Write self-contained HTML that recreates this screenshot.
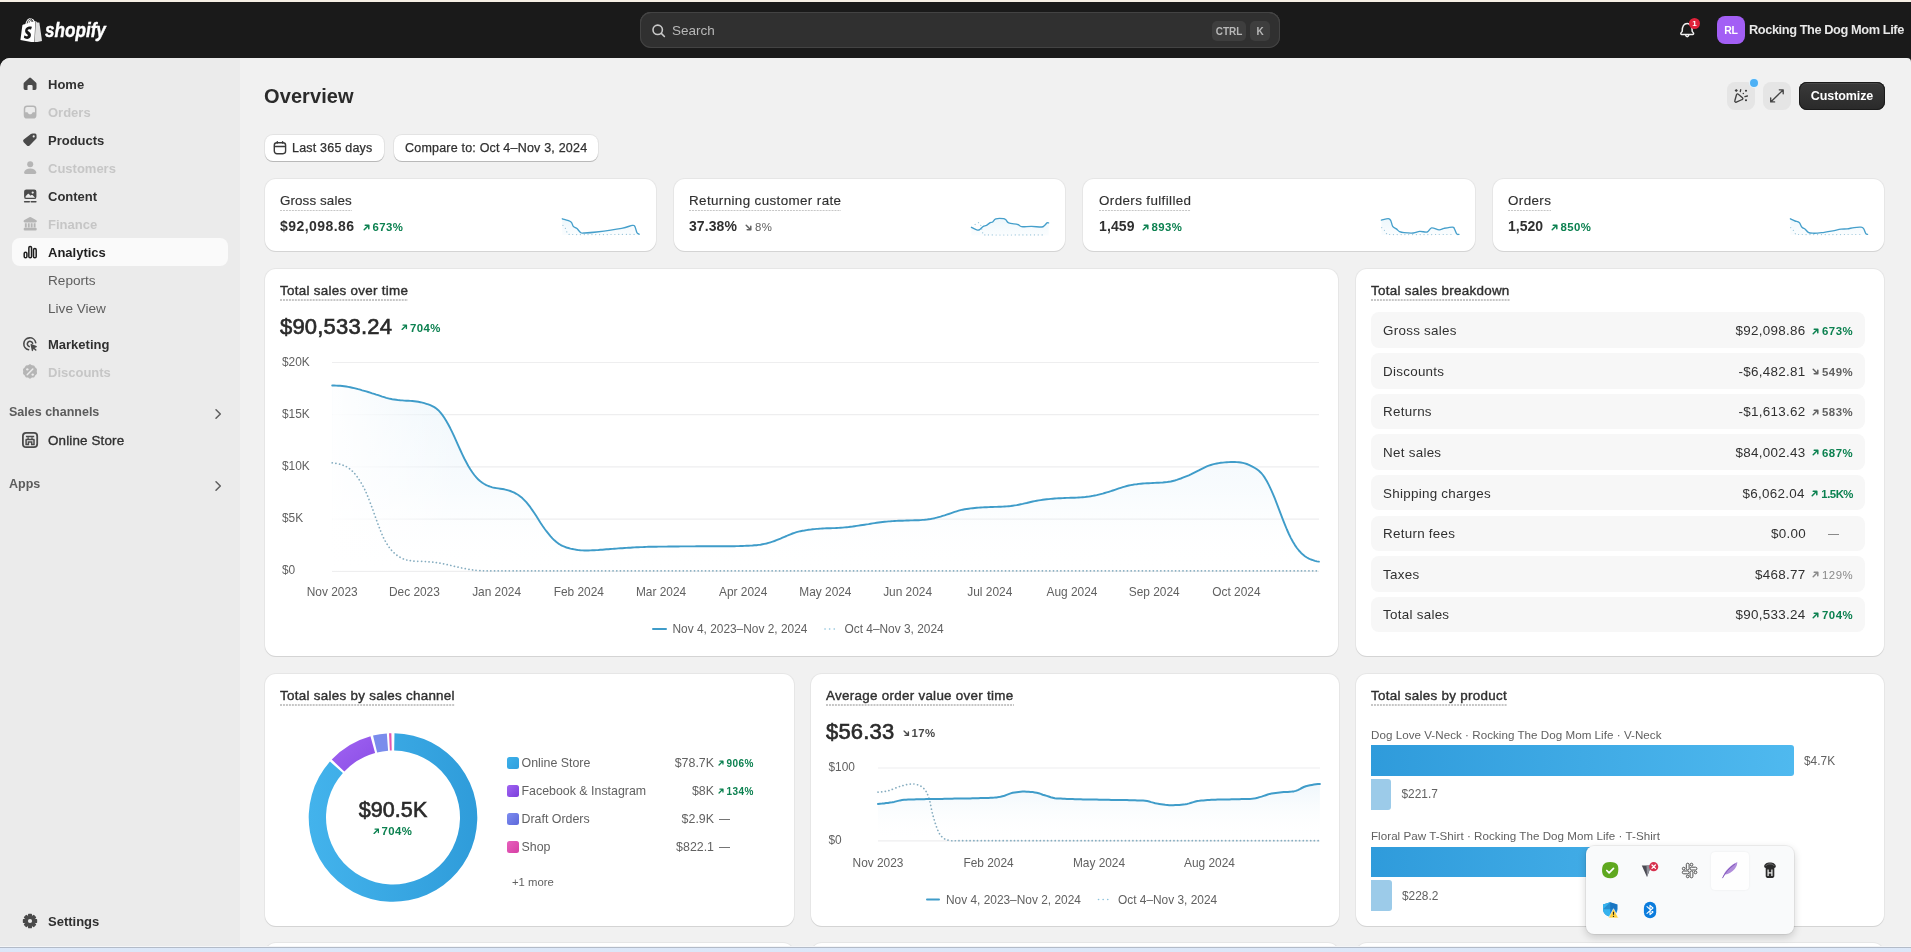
<!DOCTYPE html>
<html lang="en">
<head>
<meta charset="utf-8">
<title>Shopify Analytics Overview</title>
<style>
*{box-sizing:border-box;margin:0;padding:0}
html,body{width:1911px;height:952px;overflow:hidden;background:#f1f1f1}
body{font-family:"Liberation Sans",sans-serif;font-size:13px;color:#303030;position:relative}
.abs{position:absolute}
#wrap{position:absolute;left:0;top:0;width:1911px;height:952px;overflow:hidden;will-change:transform}
#topstrip{position:absolute;left:0;top:0;width:1911px;height:2px;background:#f6efe4}
#topbar{position:absolute;left:0;top:2px;width:1911px;height:66px;background:#1a1a1a}
#frame{position:absolute;left:0;top:57.500px;width:1911px;height:895px;background:#f1f1f1;border-radius:10px 4px 0 0}
#sidebar{position:absolute;left:0;top:57.500px;width:240px;height:895px;background:#ebebeb;border-radius:10px 0 0 0}
#botstrip{position:absolute;left:0;top:946px;width:1911px;height:6px;background:linear-gradient(#f4f5f7 0,#f4f5f7 1px,#b3bbc8 1px,#b3bbc8 2px,#dde8f8 2px,#dbe6f8 100%)}
.nav{position:absolute;left:48px;margin-top:1px;font-weight:700;font-size:13px;line-height:16px;color:#303030;white-space:nowrap}
.nav.dis{color:#c6c6c6}
.nav.sub{font-weight:400;color:#5e5e5e;font-size:13.600px}
.nav.sec{left:9px;color:#5c5c5c;font-size:12.5px}
.ico{position:absolute;left:20px;width:20px;height:20px}
.card{position:absolute;background:#fff;border-radius:11px;box-shadow:0 1px 0 0 #d4d4d4, 0 0 0 1px #e6e6e6}
.ttl{position:absolute;font-weight:400;font-size:13.400px;line-height:16px;color:#303030;-webkit-text-stroke:.400px #303030;letter-spacing:.290px;white-space:nowrap;padding-bottom:2.200px;background:linear-gradient(90deg,#c6c6c6 1.500px,rgba(198,198,198,0) 1.500px) 0 100%/2.980px 1.500px repeat-x}
.t{position:absolute;white-space:nowrap;line-height:16px}
.g{color:#0c8150;font-weight:700}
.ttl.lt{-webkit-text-stroke:.150px #303030;letter-spacing:.380px}
.btn{background:#fff;border-radius:8px;box-shadow:0 1px 0 0 #b9b9b9,0 0 0 1px #e3e3e3}
.bt{font-size:12.500px;letter-spacing:.2px;color:#303030;-webkit-text-stroke:.25px #303030}
.val{font-weight:700;font-size:14px;letter-spacing:.450px;color:#303030}
.big{font-weight:400;font-size:22px;line-height:26px;letter-spacing:.200px;color:#2a2a2a;-webkit-text-stroke:.650px #2a2a2a}
.ax{font-size:11.900px;color:#616161}
.c{text-align:center}
.rw{font-size:13.400px;color:#303030;letter-spacing:.280px}
.pc{display:flex;align-items:center;height:16px;white-space:nowrap;line-height:16px}
.pcb{display:flex;align-items:center;justify-content:flex-end;min-width:40.500px;font-size:11.400px;letter-spacing:.450px}
.lg{font-size:12.400px;color:#616161}
.pl{font-size:11.600px;color:#616161;letter-spacing:.040px}
.pct{font-size:11.400px;font-weight:700;letter-spacing:.450px}
.m{color:#616161}
</style>
</head>
<body>
<div id="wrap">
<div id="topbar">
<svg class="abs" style="left:19px;top:15.500px" width="24.600" height="24.600" viewBox="0 0 24 24"><path d="M15.009 24 1.448 21.453S3.200 7.852 3.278 7.390c.078-.638.097-.657.772-.870.097-.038.966-.309 2.160-.674C6.675 3.877 8.159 0 11.265 0c.404 0 .870.209 1.256.695h.115c1.332 0 2.085 1.137 2.508 2.370.425-.135.696-.210.714-.210l.078-.021z" fill="#fff"/><path d="M15.337 23.979l7.216-1.561S19.949 4.805 19.928 4.688c-.018-.116-.114-.192-.211-.192s-1.929-.136-1.929-.136-1.275-1.274-1.439-1.411c-.045-.037-.075-.057-.121-.074z" fill="#e0e0e0"/><path d="M11.710 11.305s-.810-.424-1.774-.424c-1.447 0-1.504.906-1.504 1.141 0 1.232 3.240 1.715 3.240 4.629 0 2.295-1.440 3.760-3.406 3.760-2.354 0-3.540-1.465-3.540-1.465l.646-2.086s1.245 1.066 2.280 1.066c.675 0 .975-.545.975-.932 0-1.619-2.654-1.694-2.654-4.359-.034-2.237 1.571-4.416 4.827-4.416 1.257 0 1.875.361 1.875.361z" fill="#1a1a1a"/><path d="M7.900 5.300C8.300 3.300 9.500 1.100 11.200.900c1.300.200 2.100 1.600 2.400 2.900" fill="none" stroke="#1a1a1a" stroke-width=".8"/><path d="M9.900 4.600c.4-1.600 1.300-2.600 2.200-2.900.2.500.3 1.200.3 2.100" fill="none" stroke="#1a1a1a" stroke-width=".6"/></svg>
<div class="abs" id="logotext" style="left:44.500px;top:15.300px;font:italic 700 20.500px/26px 'Liberation Sans',sans-serif;color:#fff;-webkit-text-stroke:.450px #fff;transform:scaleX(.835);transform-origin:0 0">shopify</div>
<div class="abs" style="left:640px;top:10px;width:640px;height:36px;border-radius:11px;background:#303030;box-shadow:inset 0 0 0 1px #434343, inset 0 1px 0 0 #525252"></div>
<svg class="abs" style="left:650px;top:20px" width="18" height="18" viewBox="0 0 18 18" fill="none" stroke="#c9c9c9" stroke-width="1.600" stroke-linecap="round"><circle cx="7.700" cy="7.800" r="4.700"/><path d="M11.300 11.400 14.400 14.500"/></svg>
<div class="abs" style="left:672px;top:19.600px;font-size:13.500px;line-height:18px;color:#b8b8b8">Search</div>
<div class="abs" style="left:1212px;top:19px;width:34px;height:20px;border-radius:5px;background:#3e3e3e;color:#b8b8b8;font-weight:700;font-size:10px;line-height:21px;text-align:center">CTRL</div>
<div class="abs" style="left:1250px;top:19px;width:20px;height:20px;border-radius:5px;background:#3e3e3e;color:#b8b8b8;font-weight:700;font-size:10px;line-height:21px;text-align:center">K</div>
<svg class="abs" style="left:1676px;top:16px" width="24" height="24" viewBox="0 0 24 24" fill="none" stroke="#f0f0f0" stroke-width="1.500" stroke-linecap="round" stroke-linejoin="round"><path d="M6.200 13.400c0-2.200.3-4.600 1.300-6 .9-1.200 2.100-1.900 3.700-1.900s2.800.7 3.700 1.900c1 1.400 1.300 3.800 1.300 6l1.200 1.500c.5.700.1 1.700-.8 1.700H5.800c-.9 0-1.300-1-.8-1.700z"/><path d="M9.700 17.200c.2.900.8 1.500 1.500 1.500s1.300-.6 1.500-1.500"/></svg>
<div class="abs" style="left:1689px;top:15.500px;width:11px;height:11px;border-radius:6px;background:#e0223a;color:#fff;font-weight:700;font-size:8px;line-height:11px;text-align:center">1</div>
<div class="abs" style="left:1717px;top:14px;width:28px;height:28px;border-radius:8px;background:#a35ff5;color:#fff;font-weight:700;font-size:10.500px;line-height:28px;text-align:center;letter-spacing:-.2px">RL</div>
<div class="abs" id="storename" style="left:1749px;top:19px;font-weight:700;font-size:12.800px;line-height:18px;color:#e8e8e8;white-space:nowrap;letter-spacing:-.420px">Rocking The Dog Mom Life</div>
</div>
<div id="topstrip"></div>
<div id="frame"></div>
<div id="sidebar"></div>
<div class="abs" style="left:12px;top:238px;width:216px;height:28px;border-radius:8px;background:#fafafa"></div>
<svg class="ico" style="left:20px;top:74px" viewBox="0 0 20 20"><path d="M9.100 3.900a1.400 1.400 0 0 1 1.900 0l4.900 4.500c.4.300.6.800.6 1.300v4.600a1.600 1.600 0 0 1-1.600 1.600h-2.300v-3.600a1.200 1.200 0 0 0-1.200-1.200h-2.700a1.200 1.200 0 0 0-1.200 1.200v3.600H5.200a1.600 1.600 0 0 1-1.600-1.600V9.700c0-.5.200-1 .6-1.300z" fill="#4a4a4a"/></svg>
<div class="nav " style="top:76px">Home</div>
<svg class="ico" style="left:20px;top:102px" viewBox="0 0 20 20"><rect x="4.500" y="4.200" width="11.200" height="11.600" rx="2.600" fill="none" stroke="#b5b5b5" stroke-width="1.500"/><path d="M4.500 10.300h2.700c.4 0 .7.200.8.600.3.700 1 1.300 2.100 1.300s1.800-.6 2.100-1.300c.1-.4.400-.6.800-.6h2.700v3.200a2.300 2.300 0 0 1-2.300 2.300H6.800a2.300 2.300 0 0 1-2.300-2.300z" fill="#b5b5b5"/></svg>
<div class="nav dis" style="top:104px">Orders</div>
<svg class="ico" style="left:20px;top:130px" viewBox="0 0 20 20"><path d="M10.900 4.100a2.300 2.300 0 0 1 1.700-.7l2.500.1a1.500 1.500 0 0 1 1.400 1.400l.1 2.500a2.300 2.300 0 0 1-.7 1.700l-6.300 6.300a1.900 1.900 0 0 1-2.700 0L3.700 12.200a1.900 1.900 0 0 1 0-2.700z" fill="#4a4a4a"/><circle cx="13.700" cy="6.400" r="1.050" fill="#ebebeb"/></svg>
<div class="nav " style="top:132px">Products</div>
<svg class="ico" style="left:20px;top:158px" viewBox="0 0 20 20"><circle cx="10.200" cy="6.200" r="3" fill="#b5b5b5"/><path d="M4.100 14.300c.5-2.300 2.900-3.700 6.100-3.700s5.600 1.400 6.100 3.700c.2.900-.5 1.700-1.400 1.700H5.500c-.9 0-1.600-.8-1.400-1.700z" fill="#b5b5b5"/></svg>
<div class="nav dis" style="top:160px">Customers</div>
<svg class="ico" style="left:20px;top:186px" viewBox="0 0 20 20"><rect x="4.100" y="3.500" width="12.300" height="9.600" rx="2.200" fill="#4a4a4a"/><circle cx="12.700" cy="6.600" r="1.150" fill="#ebebeb"/><path d="M5.600 10.200l2.200-2.300c.3-.3.800-.3 1.100 0l1.800 1.900.7-.7c.3-.3.800-.3 1.100 0l2.400 2.400v.2H5.600z" fill="#ebebeb"/><path d="M4.600 15.700h4.700M11.200 15.700h4.700" stroke="#4a4a4a" stroke-width="1.500" stroke-linecap="round"/></svg>
<div class="nav " style="top:188px">Content</div>
<svg class="ico" style="left:20px;top:214px" viewBox="0 0 20 20"><path d="M9.400 3.300a1.700 1.700 0 0 1 1.600 0l5 2.600c.5.300.8.700.8 1.300 0 .7-.5 1.200-1.200 1.200H4.800c-.7 0-1.200-.5-1.200-1.200 0-.6.300-1 .8-1.300z" fill="#b5b5b5"/><path d="M5.800 9.200v4.300M8.750 9.200v4.300M11.650 9.200v4.300M14.600 9.200v4.300" stroke="#b5b5b5" stroke-width="1.900"/><rect x="3.700" y="13.700" width="13" height="2.800" rx="1.100" fill="#b5b5b5"/></svg>
<div class="nav dis" style="top:216px">Finance</div>
<svg class="ico" style="left:20px;top:242px" viewBox="0 0 20 20"><g fill="none" stroke="#1f1f1f" stroke-width="1.500"><rect x="4.200" y="10.200" width="2.700" height="5.600" rx="1.300"/><rect x="8.850" y="4.400" width="2.700" height="11.400" rx="1.300"/><rect x="13.500" y="6.600" width="2.700" height="9.200" rx="1.300"/></g></svg>
<div class="nav " style="top:244px;color:#1f1f1f">Analytics</div>
<div class="nav sub" style="top:272px">Reports</div>
<div class="nav sub" style="top:300px">Live View</div>
<svg class="ico" style="left:20px;top:334px" viewBox="0 0 20 20"><g fill="none" stroke="#4a4a4a" stroke-width="1.600" stroke-linecap="round"><path d="M15.700 8.600a6 6 0 1 0-7.100 7.100"/><path d="M12.600 9.200a2.700 2.700 0 1 0-3.400 3.400"/></g><path d="M10.600 10.900c-.2-.5.300-1 .8-.8l5.100 2c.5.200.5.900 0 1.100l-1.900.7 1.700 1.700c.3.300.3.700 0 1s-.7.300-1 0l-1.700-1.700-.7 1.900c-.2.500-.9.500-1.100 0z" fill="#4a4a4a"/></svg>
<div class="nav " style="top:336px">Marketing</div>
<svg class="ico" style="left:20px;top:362px" viewBox="0 0 20 20"><g transform="translate(10 10) scale(1.17) translate(-10.2 -9.9)"><path d="M10.200 3.200c.7 0 1.100.6 1.700.9.600.2 1.400 0 1.900.4.500.4.600 1.100 1 1.600.4.500 1.100.8 1.300 1.400.2.600-.1 1.300-.1 1.900 0 .6.400 1.300.1 1.900-.2.600-.9.900-1.300 1.400-.4.500-.5 1.200-1 1.600-.5.400-1.300.2-1.900.4-.6.300-1 .900-1.700.900s-1.100-.6-1.700-.9c-.6-.2-1.400 0-1.900-.4-.5-.4-.6-1.100-1-1.600-.4-.5-1.100-.8-1.300-1.400-.2-.6.100-1.300.1-1.900 0-.6-.4-1.300-.1-1.900.2-.6.900-.9 1.300-1.400.4-.5.500-1.200 1-1.600.5-.4 1.300-.2 1.900-.4.600-.3 1-.9 1.700-.9z" fill="#b5b5b5"/><path d="M7.800 12.200l4.800-4.800" stroke="#ebebeb" stroke-width="1.300" stroke-linecap="round"/><circle cx="7.900" cy="7.600" r="1" fill="#ebebeb"/><circle cx="12.500" cy="12.100" r="1" fill="#ebebeb"/></g></svg>
<div class="nav dis" style="top:364px">Discounts</div>
<div class="nav sec" style="top:403px">Sales channels</div>
<svg class="abs" style="left:210px;top:406px" width="16" height="16" viewBox="0 0 16 16" fill="none" stroke="#5e5e5e" stroke-width="1.500" stroke-linecap="round" stroke-linejoin="round"><path d="M6 3.700 10.300 8 6 12.300"/></svg>
<svg class="ico" style="left:20px;top:430px" viewBox="0 0 20 20"><rect x="2.900" y="2.900" width="14.300" height="14.300" rx="3.200" fill="none" stroke="#4a4a4a" stroke-width="1.800"/><path d="M5.900 6.600h8.300M5.700 9.500h8.700" stroke="#4a4a4a" stroke-width="1.500"/><path d="M6.100 9.500v4.900h2.300v-2.300h3.300v2.300h2.300V9.500" fill="none" stroke="#4a4a4a" stroke-width="1.500"/><path d="M8.100 7.300v2M12 7.300v2" stroke="#4a4a4a" stroke-width="1.300"/></svg>
<div class="nav " style="top:432px;font-weight:400;font-size:13.400px;letter-spacing:.150px;-webkit-text-stroke:.350px #303030">Online Store</div>
<div class="nav sec" style="top:475px">Apps</div>
<svg class="abs" style="left:210px;top:478px" width="16" height="16" viewBox="0 0 16 16" fill="none" stroke="#5e5e5e" stroke-width="1.500" stroke-linecap="round" stroke-linejoin="round"><path d="M6 3.700 10.300 8 6 12.300"/></svg>
<svg class="ico" style="left:20px;top:911px" viewBox="0 0 20 20"><path d="M8.49 5.13L8.67 3.43L11.33 3.43L11.51 5.13L12.38 5.49L13.70 4.42L15.58 6.30L14.51 7.62L14.87 8.49L16.57 8.67L16.57 11.33L14.87 11.51L14.51 12.38L15.58 13.70L13.70 15.58L12.38 14.51L11.51 14.87L11.33 16.57L8.67 16.57L8.49 14.87L7.62 14.51L6.30 15.58L4.42 13.70L5.49 12.38L5.13 11.51L3.43 11.33L3.43 8.67L5.13 8.49L5.49 7.62L4.42 6.30L6.30 4.42L7.62 5.49Z" fill="#4a4a4a" stroke="#4a4a4a" stroke-width="1.200" stroke-linejoin="round"/><circle cx="10" cy="10" r="2.100" fill="#ebebeb"/></svg>
<div class="nav " style="top:913px">Settings</div>

<div class="t" style="left:264px;top:84px;font-weight:700;font-size:20px;line-height:24px;letter-spacing:.1px;color:#2b2b2b">Overview</div>
<div class="abs" style="left:1727px;top:82px;width:28px;height:28px;border-radius:8px;background:#e5e5e5"></div>
<svg class="abs" style="left:1727px;top:82px" width="28" height="28" viewBox="1727 82 28 28" fill="none" stroke="#404040" stroke-width="1.350" stroke-linecap="round" stroke-linejoin="round"><path d="M1736.500 94.700c.3-.8 1.200-1 1.800-.5l4.200 3.500c.6.500.5 1.500-.3 1.800l-5.900 2.600c-.9.400-1.800-.5-1.500-1.400z"/><path d="M1740.700 89.700l-.4 2M1744.900 96.600l2.500-.6M1735.400 90.500h1.700M1736.250 89.650v1.700" stroke-width="1.300"/><circle cx="1746" cy="90.800" r="1.050" fill="#3a3a3a" stroke="none"/><circle cx="1746" cy="100.200" r="1.050" fill="#3a3a3a" stroke="none"/><circle cx="1743.300" cy="93.500" r=".75" fill="#3a3a3a" stroke="none"/></svg>
<div class="abs" style="left:1749.800px;top:78.800px;width:8.400px;height:8.400px;border-radius:5px;background:#4cb0f5;box-shadow:0 0 0 1px #e3f3fd"></div>
<div class="abs" style="left:1763px;top:82px;width:28px;height:28px;border-radius:8px;background:#e5e5e5"></div>
<svg class="abs" style="left:1763px;top:82px" width="28" height="28" viewBox="1763 82 28 28" fill="none" stroke="#454545" stroke-width="1.350" stroke-linecap="round" stroke-linejoin="round"><path d="M1771.200 101.600 1782.800 90.200M1779.300 89.800h3.900v3.900M1770.700 98v3.900h3.900"/></svg>
<div class="abs" style="left:1799px;top:82px;width:86px;height:28px;border-radius:8px;background:linear-gradient(#3a3a3a,#2a2a2a);box-shadow:inset 0 0 0 1px #1a1a1a, inset 0 2px 0 0 #484848;color:#fff;font-weight:700;font-size:12.500px;line-height:28px;text-align:center;letter-spacing:-.1px">Customize</div>

<div class="abs btn" style="left:265px;top:135px;width:119px;height:26px"></div>
<svg class="abs" style="left:271px;top:139px" width="18" height="18" viewBox="0 0 18 18" fill="none" stroke="#3a3a3a" stroke-width="1.400" stroke-linecap="round"><rect x="3.300" y="3.700" width="11.300" height="11" rx="2.600"/><path d="M3.600 7.500h10.700M6.300 2.600v1.400M11.600 2.600v1.400"/></svg>
<div class="t bt" style="left:292px;top:140px">Last 365 days</div>
<div class="abs btn" style="left:394px;top:135px;width:204px;height:26px"></div>
<div class="t bt" style="left:405px;top:140px">Compare to: Oct 4–Nov 3, 2024</div>

<div class="card" style="left:264.500px;top:179px;width:391.500px;height:72px"></div>
<div class="card" style="left:673.500px;top:179px;width:391.500px;height:72px"></div>
<div class="card" style="left:1083px;top:179px;width:392px;height:72px"></div>
<div class="card" style="left:1492.500px;top:179px;width:391.500px;height:72px"></div>
<div class="ttl lt" style="left:280px;top:193.100px;letter-spacing:.1px">Gross sales</div>
<div class="t val" style="left:280px;top:218.300px">$92,098.86</div><svg class="abs" style="left:363px;top:224px" width="7" height="7" viewBox="0 0 7 7" fill="none" stroke="#0c8150" stroke-width="1.500" stroke-linecap="round" stroke-linejoin="round"><path d="M1.200 5.800 5.700 1.300M2.200 1.200h3.600v3.600"/></svg><div class="t pct g" style="left:372.500px;top:219px">673%</div>
<div class="ttl lt" style="left:689px;top:193.100px">Returning customer rate</div>
<div class="t val" style="left:689px;top:218.300px;letter-spacing:.070px">37.38%</div><svg class="abs" style="left:745px;top:224px" width="7" height="7" viewBox="0 0 7 7" fill="none" stroke="#616161" stroke-width="1.500" stroke-linecap="round" stroke-linejoin="round"><path d="M1.200 1.200 5.700 5.700M2.200 5.800h3.600V2.200"/></svg><div class="t pct m" style="left:755px;top:219px;font-weight:400">8%</div>
<div class="ttl lt" style="left:1099px;top:193.100px">Orders fulfilled</div>
<div class="t val" style="left:1099px;top:218.300px;letter-spacing:.1px">1,459</div><svg class="abs" style="left:1142px;top:224px" width="7" height="7" viewBox="0 0 7 7" fill="none" stroke="#0c8150" stroke-width="1.500" stroke-linecap="round" stroke-linejoin="round"><path d="M1.200 5.800 5.700 1.300M2.200 1.200h3.600v3.600"/></svg><div class="t pct g" style="left:1151.500px;top:219px">893%</div>
<div class="ttl lt" style="left:1508px;top:193.100px">Orders</div>
<div class="t val" style="left:1508px;top:218.300px;letter-spacing:0">1,520</div><svg class="abs" style="left:1551px;top:224px" width="7" height="7" viewBox="0 0 7 7" fill="none" stroke="#0c8150" stroke-width="1.500" stroke-linecap="round" stroke-linejoin="round"><path d="M1.200 5.800 5.700 1.300M2.200 1.200h3.600v3.600"/></svg><div class="t pct g" style="left:1560.500px;top:219px">850%</div>
<svg class="abs" style="left:0;top:0" width="1911" height="260" viewBox="0 0 1911 260"><defs><linearGradient id="sg" x1="0" y1="216" x2="0" y2="236" gradientUnits="userSpaceOnUse"><stop offset="0" stop-color="#d4ebf8" stop-opacity=".5"/><stop offset="1" stop-color="#eef7fc" stop-opacity=".25"/></linearGradient></defs><path d="M562.3 218.8C563.7 219.3 569.0 220.4 570.8 221.7C572.6 223.0 572.3 225.2 573.3 226.4C574.3 227.6 575.8 227.6 577.0 228.6C578.2 229.6 579.6 232.0 580.8 232.7C582.0 233.4 581.4 233.1 584.0 233.0C586.6 232.9 590.2 232.8 596.5 232.0C602.8 231.2 615.6 229.4 621.6 228.3C627.6 227.2 630.1 225.7 632.3 225.4C634.5 225.1 634.0 225.2 634.8 226.4C635.6 227.6 636.3 231.4 637.0 232.7C637.7 234.0 638.8 233.9 639.2 234.2L639.2 235L562.3 235Z" fill="url(#sg)"/><path d="M562.9 225.4C563.3 225.9 564.7 227.2 565.4 228.3C566.1 229.5 566.3 231.3 567.0 232.3C567.7 233.3 567.0 234.3 569.5 234.4C580.9 234.8 624.4 234.4 635.4 234.4" fill="none" stroke="#9cc6da" stroke-width="1.200" stroke-dasharray="0.100 3.700" stroke-linecap="round"/><path d="M562.3 218.8C563.7 219.3 569.0 220.4 570.8 221.7C572.6 223.0 572.3 225.2 573.3 226.4C574.3 227.6 575.8 227.6 577.0 228.6C578.2 229.6 579.6 232.0 580.8 232.7C582.0 233.4 581.4 233.1 584.0 233.0C586.6 232.9 590.2 232.8 596.5 232.0C602.8 231.2 615.6 229.4 621.6 228.3C627.6 227.2 630.1 225.7 632.3 225.4C634.5 225.1 634.0 225.2 634.8 226.4C635.6 227.6 636.3 231.4 637.0 232.7C637.7 234.0 638.8 233.9 639.2 234.2" fill="none" stroke="#459fcb" stroke-width="1.350" stroke-linejoin="round" stroke-linecap="round"/><path d="M971.4 227.3C972.4 227.8 976.1 229.8 977.6 230.1C979.1 230.4 979.2 229.8 980.1 229.2C981.0 228.6 982.2 227.0 983.3 226.4C984.3 225.8 985.2 226.0 986.4 225.4C987.5 224.8 989.2 223.2 990.2 222.6C991.2 222.0 991.8 222.6 992.7 222.0C993.6 221.4 994.0 219.4 995.8 218.8C997.6 218.2 1001.7 218.4 1003.4 218.6C1005.1 218.8 1005.0 219.1 1005.9 219.8C1006.8 220.5 1006.7 222.1 1008.7 222.9C1010.7 223.7 1015.6 223.9 1017.8 224.5C1019.9 225.1 1019.3 226.4 1021.6 226.7C1023.9 227.0 1028.2 226.3 1031.6 226.4C1034.9 226.5 1039.6 227.1 1041.7 227.0C1043.8 226.9 1043.3 226.4 1044.2 225.7C1045.1 225.0 1046.3 223.4 1047.0 222.9C1047.7 222.4 1048.3 222.9 1048.6 222.9L1048.6 235.5L971.4 235.5Z" fill="url(#sg)"/><path d="M975.1 224.5C975.7 224.2 977.7 222.4 978.6 222.6C979.5 222.8 980.1 223.5 980.8 225.4C981.5 227.3 982.3 232.3 983.0 233.9C983.7 235.5 983.0 234.9 985.0 234.9C995.3 235.1 1034.8 234.9 1044.8 234.9" fill="none" stroke="#9cc6da" stroke-width="1.200" stroke-dasharray="0.100 3.700" stroke-linecap="round"/><path d="M971.4 227.3C972.4 227.8 976.1 229.8 977.6 230.1C979.1 230.4 979.2 229.8 980.1 229.2C981.0 228.6 982.2 227.0 983.3 226.4C984.3 225.8 985.2 226.0 986.4 225.4C987.5 224.8 989.2 223.2 990.2 222.6C991.2 222.0 991.8 222.6 992.7 222.0C993.6 221.4 994.0 219.4 995.8 218.8C997.6 218.2 1001.7 218.4 1003.4 218.6C1005.1 218.8 1005.0 219.1 1005.9 219.8C1006.8 220.5 1006.7 222.1 1008.7 222.9C1010.7 223.7 1015.6 223.9 1017.8 224.5C1019.9 225.1 1019.3 226.4 1021.6 226.7C1023.9 227.0 1028.2 226.3 1031.6 226.4C1034.9 226.5 1039.6 227.1 1041.7 227.0C1043.8 226.9 1043.3 226.4 1044.2 225.7C1045.1 225.0 1046.3 223.4 1047.0 222.9C1047.7 222.4 1048.3 222.9 1048.6 222.9" fill="none" stroke="#459fcb" stroke-width="1.350" stroke-linejoin="round" stroke-linecap="round"/><path d="M1381.4 220.1C1382.6 219.9 1386.7 218.6 1388.3 218.7C1389.9 218.8 1390.1 219.4 1390.8 220.7C1391.5 222.0 1391.8 225.0 1392.7 226.4C1393.6 227.8 1395.2 228.0 1396.4 228.9C1397.6 229.8 1398.3 231.1 1399.6 231.7C1400.9 232.3 1401.7 232.5 1404.0 232.7C1406.3 232.9 1410.8 233.2 1413.4 233.0C1416.0 232.8 1417.4 231.6 1419.7 231.4C1422.0 231.2 1425.2 232.6 1427.2 232.0C1429.2 231.4 1429.6 228.3 1431.6 227.9C1433.6 227.5 1437.0 229.7 1439.1 229.8C1441.2 229.9 1441.9 228.8 1444.1 228.3C1446.3 227.9 1450.6 227.1 1452.3 227.1C1454.0 227.1 1453.5 227.2 1454.2 228.3C1454.9 229.4 1455.9 232.9 1456.7 233.9C1457.5 234.9 1458.5 234.3 1458.9 234.4L1458.9 235L1381.4 235Z" fill="url(#sg)"/><path d="M1381.7 227.6C1382.2 228.1 1383.9 229.7 1384.8 230.8C1385.7 231.9 1386.3 233.6 1387.0 234.2C1387.7 234.8 1387.0 234.5 1389.0 234.5C1400.0 234.6 1442.2 234.5 1452.9 234.5" fill="none" stroke="#9cc6da" stroke-width="1.200" stroke-dasharray="0.100 3.700" stroke-linecap="round"/><path d="M1381.4 220.1C1382.6 219.9 1386.7 218.6 1388.3 218.7C1389.9 218.8 1390.1 219.4 1390.8 220.7C1391.5 222.0 1391.8 225.0 1392.7 226.4C1393.6 227.8 1395.2 228.0 1396.4 228.9C1397.6 229.8 1398.3 231.1 1399.6 231.7C1400.9 232.3 1401.7 232.5 1404.0 232.7C1406.3 232.9 1410.8 233.2 1413.4 233.0C1416.0 232.8 1417.4 231.6 1419.7 231.4C1422.0 231.2 1425.2 232.6 1427.2 232.0C1429.2 231.4 1429.6 228.3 1431.6 227.9C1433.6 227.5 1437.0 229.7 1439.1 229.8C1441.2 229.9 1441.9 228.8 1444.1 228.3C1446.3 227.9 1450.6 227.1 1452.3 227.1C1454.0 227.1 1453.5 227.2 1454.2 228.3C1454.9 229.4 1455.9 232.9 1456.7 233.9C1457.5 234.9 1458.5 234.3 1458.9 234.4" fill="none" stroke="#459fcb" stroke-width="1.350" stroke-linejoin="round" stroke-linecap="round"/><path d="M1790.4 218.8C1791.2 219.2 1793.6 220.4 1795.1 221.0C1796.6 221.6 1798.0 221.5 1799.2 222.6C1800.4 223.7 1801.0 226.2 1802.0 227.3C1803.0 228.4 1804.2 228.4 1805.2 229.2C1806.2 230.0 1807.0 231.6 1808.3 232.3C1809.5 233.0 1810.5 233.1 1812.7 233.2C1814.9 233.3 1818.2 233.1 1821.5 232.7C1824.8 232.3 1829.5 231.4 1832.8 230.8C1836.0 230.2 1838.6 229.5 1841.0 229.2C1843.4 228.9 1845.0 229.2 1847.2 228.9C1849.4 228.6 1851.8 227.9 1854.1 227.6C1856.4 227.3 1859.4 227.0 1861.0 227.2C1862.6 227.4 1862.8 227.5 1863.6 228.6C1864.4 229.7 1865.1 232.6 1865.8 233.6C1866.5 234.6 1867.3 234.3 1867.6 234.4L1867.6 235L1790.4 235Z" fill="url(#sg)"/><path d="M1790.7 227.6C1791.2 228.1 1792.7 229.4 1793.5 230.5C1794.3 231.6 1795.0 233.5 1795.7 234.2C1796.5 234.9 1795.7 234.5 1798.0 234.5C1809.0 234.6 1851.1 234.5 1861.7 234.5" fill="none" stroke="#9cc6da" stroke-width="1.200" stroke-dasharray="0.100 3.700" stroke-linecap="round"/><path d="M1790.4 218.8C1791.2 219.2 1793.6 220.4 1795.1 221.0C1796.6 221.6 1798.0 221.5 1799.2 222.6C1800.4 223.7 1801.0 226.2 1802.0 227.3C1803.0 228.4 1804.2 228.4 1805.2 229.2C1806.2 230.0 1807.0 231.6 1808.3 232.3C1809.5 233.0 1810.5 233.1 1812.7 233.2C1814.9 233.3 1818.2 233.1 1821.5 232.7C1824.8 232.3 1829.5 231.4 1832.8 230.8C1836.0 230.2 1838.6 229.5 1841.0 229.2C1843.4 228.9 1845.0 229.2 1847.2 228.9C1849.4 228.6 1851.8 227.9 1854.1 227.6C1856.4 227.3 1859.4 227.0 1861.0 227.2C1862.6 227.4 1862.8 227.5 1863.6 228.6C1864.4 229.7 1865.1 232.6 1865.8 233.6C1866.5 234.6 1867.3 234.3 1867.6 234.4" fill="none" stroke="#459fcb" stroke-width="1.350" stroke-linejoin="round" stroke-linecap="round"/></svg>
<!--MAIN2--><div class="card" style="left:264.500px;top:268.500px;width:1073.500px;height:387.500px"></div>
<div class="ttl" style="left:280px;top:282.600px">Total sales over time</div>
<div class="t big" style="left:280px;top:314px">$90,533.24</div><svg class="abs" style="left:401px;top:324px" width="6.5" height="6.5" viewBox="0 0 7 7" fill="none" stroke="#0c8150" stroke-width="1.500" stroke-linecap="round" stroke-linejoin="round"><path d="M1.200 5.800 5.700 1.300M2.200 1.200h3.600v3.600"/></svg><div class="t pct g" style="left:410px;top:320px">704%</div>
<div class="t ax" style="left:282px;top:354px">$20K</div>
<div class="t ax" style="left:282px;top:406px">$15K</div>
<div class="t ax" style="left:282px;top:458px">$10K</div>
<div class="t ax" style="left:282px;top:510px">$5K</div>
<div class="t ax" style="left:282px;top:562px">$0</div>
<div class="t ax c" style="left:292.2px;top:584px;width:80px">Nov 2023</div>
<div class="t ax c" style="left:374.4px;top:584px;width:80px">Dec 2023</div>
<div class="t ax c" style="left:456.6px;top:584px;width:80px">Jan 2024</div>
<div class="t ax c" style="left:538.8px;top:584px;width:80px">Feb 2024</div>
<div class="t ax c" style="left:621.0px;top:584px;width:80px">Mar 2024</div>
<div class="t ax c" style="left:703.2px;top:584px;width:80px">Apr 2024</div>
<div class="t ax c" style="left:785.4px;top:584px;width:80px">May 2024</div>
<div class="t ax c" style="left:867.6px;top:584px;width:80px">Jun 2024</div>
<div class="t ax c" style="left:949.8px;top:584px;width:80px">Jul 2024</div>
<div class="t ax c" style="left:1032.0px;top:584px;width:80px">Aug 2024</div>
<div class="t ax c" style="left:1114.2px;top:584px;width:80px">Sep 2024</div>
<div class="t ax c" style="left:1196.4px;top:584px;width:80px">Oct 2024</div>
<div class="t ax" style="left:672.500px;top:621px">Nov 4, 2023–Nov 2, 2024</div>
<div class="t ax" style="left:844.500px;top:621px">Oct 4–Nov 3, 2024</div>
<div class="card" style="left:1355.500px;top:268.500px;width:528.500px;height:387.500px"></div>
<div class="ttl" style="left:1371px;top:282.600px">Total sales breakdown</div>
<div class="abs" style="left:1371px;top:312.4px;width:494px;height:35.600px;border-radius:8px;background:#f7f7f7"></div>
<div class="t rw" style="left:1383px;top:323.0px">Gross sales</div>
<div class="abs pc" style="right:58px;top:323.0px"><span class="rw" style="margin-right:6.500px">$92,098.86</span><span class="pcb" style="color:#0c8150;font-weight:700"><svg style="margin:0 3.200px 0 0" width="7" height="7" viewBox="0 0 7 7" fill="none" stroke="#0c8150" stroke-width="1.500" stroke-linecap="round" stroke-linejoin="round"><path d="M1.200 5.800 5.700 1.300M2.200 1.200h3.600v3.600"/></svg><span>673%</span></span></div>
<div class="abs" style="left:1371px;top:353.0px;width:494px;height:35.600px;border-radius:8px;background:#f7f7f7"></div>
<div class="t rw" style="left:1383px;top:363.6px">Discounts</div>
<div class="abs pc" style="right:58px;top:363.6px"><span class="rw" style="margin-right:6.500px">-$6,482.81</span><span class="pcb" style="color:#616161;font-weight:700"><svg style="margin:0 3.200px 0 0" width="7" height="7" viewBox="0 0 7 7" fill="none" stroke="#616161" stroke-width="1.500" stroke-linecap="round" stroke-linejoin="round"><path d="M1.200 1.200 5.700 5.700M2.200 5.800h3.600V2.200"/></svg><span>549%</span></span></div>
<div class="abs" style="left:1371px;top:393.6px;width:494px;height:35.600px;border-radius:8px;background:#f7f7f7"></div>
<div class="t rw" style="left:1383px;top:404.2px">Returns</div>
<div class="abs pc" style="right:58px;top:404.2px"><span class="rw" style="margin-right:6.500px">-$1,613.62</span><span class="pcb" style="color:#616161;font-weight:700"><svg style="margin:0 3.200px 0 0" width="7" height="7" viewBox="0 0 7 7" fill="none" stroke="#616161" stroke-width="1.500" stroke-linecap="round" stroke-linejoin="round"><path d="M1.200 5.800 5.700 1.300M2.200 1.200h3.600v3.600"/></svg><span>583%</span></span></div>
<div class="abs" style="left:1371px;top:434.3px;width:494px;height:35.600px;border-radius:8px;background:#f7f7f7"></div>
<div class="t rw" style="left:1383px;top:444.9px">Net sales</div>
<div class="abs pc" style="right:58px;top:444.9px"><span class="rw" style="margin-right:6.500px">$84,002.43</span><span class="pcb" style="color:#0c8150;font-weight:700"><svg style="margin:0 3.200px 0 0" width="7" height="7" viewBox="0 0 7 7" fill="none" stroke="#0c8150" stroke-width="1.500" stroke-linecap="round" stroke-linejoin="round"><path d="M1.200 5.800 5.700 1.300M2.200 1.200h3.600v3.600"/></svg><span>687%</span></span></div>
<div class="abs" style="left:1371px;top:474.9px;width:494px;height:35.600px;border-radius:8px;background:#f7f7f7"></div>
<div class="t rw" style="left:1383px;top:485.5px">Shipping charges</div>
<div class="abs pc" style="right:58px;top:485.5px"><span class="rw" style="margin-right:6.500px">$6,062.04</span><span class="pcb" style="color:#0c8150;font-weight:700"><svg style="margin:0 3.200px 0 0" width="7" height="7" viewBox="0 0 7 7" fill="none" stroke="#0c8150" stroke-width="1.500" stroke-linecap="round" stroke-linejoin="round"><path d="M1.200 5.800 5.700 1.300M2.200 1.200h3.600v3.600"/></svg><span style="letter-spacing:-.5px">1.5K%</span></span></div>
<div class="abs" style="left:1371px;top:515.5px;width:494px;height:35.600px;border-radius:8px;background:#f7f7f7"></div>
<div class="t rw" style="left:1383px;top:526.1px">Return fees</div>
<div class="abs" style="left:1828px;top:533.6px;width:11px;height:1.300px;background:#8a8a8a"></div>
<div class="abs pc" style="right:58px;top:526.1px"><span class="rw" style="margin-right:6.500px">$0.00</span><span class="pcb" style="color:;font-weight:400"></span></div>
<div class="abs" style="left:1371px;top:556.1px;width:494px;height:35.600px;border-radius:8px;background:#f7f7f7"></div>
<div class="t rw" style="left:1383px;top:566.7px">Taxes</div>
<div class="abs pc" style="right:58px;top:566.7px"><span class="rw" style="margin-right:6.500px">$468.77</span><span class="pcb" style="color:#8a8a8a;font-weight:400"><svg style="margin:0 3.200px 0 0" width="7" height="7" viewBox="0 0 7 7" fill="none" stroke="#8a8a8a" stroke-width="1.500" stroke-linecap="round" stroke-linejoin="round"><path d="M1.200 5.800 5.700 1.300M2.200 1.200h3.600v3.600"/></svg><span>129%</span></span></div>
<div class="abs" style="left:1371px;top:596.7px;width:494px;height:35.600px;border-radius:8px;background:#f7f7f7"></div>
<div class="t rw" style="left:1383px;top:607.3px">Total sales</div>
<div class="abs pc" style="right:58px;top:607.3px"><span class="rw" style="margin-right:6.500px">$90,533.24</span><span class="pcb" style="color:#0c8150;font-weight:700"><svg style="margin:0 3.200px 0 0" width="7" height="7" viewBox="0 0 7 7" fill="none" stroke="#0c8150" stroke-width="1.500" stroke-linecap="round" stroke-linejoin="round"><path d="M1.200 5.800 5.700 1.300M2.200 1.200h3.600v3.600"/></svg><span>704%</span></span></div>
<div class="card" style="left:264.500px;top:673.500px;width:529px;height:252.500px"></div>
<div class="ttl" style="left:280px;top:687.700px">Total sales by sales channel</div>
<div class="t" style="left:333px;width:120px;text-align:center;top:798px;font-weight:400;font-size:21.500px;line-height:24px;letter-spacing:.1px;color:#2a2a2a;-webkit-text-stroke:.650px #2a2a2a">$90.5K</div>
<svg class="abs" style="left:372.5px;top:827.5px" width="6.5" height="6.5" viewBox="0 0 7 7" fill="none" stroke="#0c8150" stroke-width="1.500" stroke-linecap="round" stroke-linejoin="round"><path d="M1.200 5.800 5.700 1.300M2.200 1.200h3.600v3.600"/></svg><div class="t pct g" style="left:381.500px;top:822.500px">704%</div>
<div class="abs" style="left:507px;top:757px;width:12px;height:12px;border-radius:2.500px;background:linear-gradient(135deg,#3db0ea,#2f9fde)"></div>
<div class="t lg" style="left:521.500px;top:755px">Online Store</div>
<div class="t lg" style="left:614px;width:100px;text-align:right;top:755px">$78.7K</div>
<svg class="abs" style="left:718px;top:760px" width="6" height="6" viewBox="0 0 7 7" fill="none" stroke="#0c8150" stroke-width="1.500" stroke-linecap="round" stroke-linejoin="round"><path d="M1.200 5.800 5.700 1.300M2.200 1.200h3.600v3.600"/></svg><div class="t pct g" style="left:726.500px;top:755.5px;font-size:10px;letter-spacing:.4px">906%</div>
<div class="abs" style="left:507px;top:785px;width:12px;height:12px;border-radius:2.500px;background:linear-gradient(135deg,#a164f2,#7b3fdb)"></div>
<div class="t lg" style="left:521.500px;top:783px">Facebook &amp; Instagram</div>
<div class="t lg" style="left:614px;width:100px;text-align:right;top:783px">$8K</div>
<svg class="abs" style="left:718px;top:788px" width="6" height="6" viewBox="0 0 7 7" fill="none" stroke="#0c8150" stroke-width="1.500" stroke-linecap="round" stroke-linejoin="round"><path d="M1.200 5.800 5.700 1.300M2.200 1.200h3.600v3.600"/></svg><div class="t pct g" style="left:726.500px;top:783.5px;font-size:10px;letter-spacing:.4px">134%</div>
<div class="abs" style="left:507px;top:813px;width:12px;height:12px;border-radius:2.500px;background:linear-gradient(135deg,#7d8df0,#5d68da)"></div>
<div class="t lg" style="left:521.500px;top:811px">Draft Orders</div>
<div class="t lg" style="left:614px;width:100px;text-align:right;top:811px">$2.9K</div>
<div class="abs" style="left:718.500px;top:818.8px;width:11.500px;height:1.300px;background:#757575"></div>
<div class="abs" style="left:507px;top:841px;width:12px;height:12px;border-radius:2.500px;background:linear-gradient(135deg,#e760bd,#d640a4)"></div>
<div class="t lg" style="left:521.500px;top:839px">Shop</div>
<div class="t lg" style="left:614px;width:100px;text-align:right;top:839px">$822.1</div>
<div class="abs" style="left:718.500px;top:846.8px;width:11.500px;height:1.300px;background:#757575"></div>
<div class="t" style="left:512px;top:874px;font-size:11.300px;color:#616161">+1 more</div>
<div class="card" style="left:810.500px;top:673.500px;width:528.500px;height:252.500px"></div>
<div class="ttl" style="left:826px;top:687.700px">Average order value over time</div>
<div class="t big" style="left:826px;top:719px">$56.33</div><svg class="abs" style="left:903px;top:729.5px" width="6.5" height="6.5" viewBox="0 0 7 7" fill="none" stroke="#4a4a4a" stroke-width="1.500" stroke-linecap="round" stroke-linejoin="round"><path d="M1.200 1.200 5.700 5.700M2.200 5.800h3.600V2.200"/></svg><div class="t pct" style="left:911.500px;top:725px;color:#4a4a4a">17%</div>
<div class="t ax" style="left:828.500px;top:759px">$100</div><div class="t ax" style="left:828.500px;top:832px">$0</div>
<div class="t ax c" style="left:838px;top:854.500px;width:80px">Nov 2023</div>
<div class="t ax c" style="left:948.5px;top:854.500px;width:80px">Feb 2024</div>
<div class="t ax c" style="left:1059px;top:854.500px;width:80px">May 2024</div>
<div class="t ax c" style="left:1169.5px;top:854.500px;width:80px">Aug 2024</div>
<div class="t ax" style="left:946px;top:891.500px">Nov 4, 2023–Nov 2, 2024</div>
<div class="t ax" style="left:1118px;top:891.500px">Oct 4–Nov 3, 2024</div>
<div class="card" style="left:1355.500px;top:673.500px;width:528.500px;height:252.500px"></div>
<div class="ttl" style="left:1371px;top:687.700px">Total sales by product</div>
<div class="t pl" style="left:1371px;top:727px">Dog Love V-Neck · Rocking The Dog Mom Life · V-Neck</div>
<div class="abs" style="left:1371px;top:745.300px;width:423px;height:30.700px;border-radius:0 3px 3px 0;background:linear-gradient(90deg,#2f9bdb,#4fb9ef)"></div>
<div class="t ax" style="left:1804px;top:753px">$4.7K</div>
<div class="abs" style="left:1371px;top:779px;width:20px;height:30.700px;border-radius:0 3px 3px 0;background:#9ccbe9"></div>
<div class="t ax" style="left:1401.500px;top:786px">$221.7</div>
<div class="t pl" style="left:1371px;top:828px">Floral Paw T-Shirt · Rocking The Dog Mom Life · T-Shirt</div>
<div class="abs" style="left:1371px;top:846.500px;width:400px;height:30.700px;border-radius:0 3px 3px 0;background:linear-gradient(90deg,#2f9bdb,#4fb9ef)"></div>
<div class="abs" style="left:1371px;top:880px;width:20.500px;height:30.700px;border-radius:0 3px 3px 0;background:#9ccbe9"></div>
<div class="t ax" style="left:1402px;top:887.500px">$228.2</div>
<div class="card" style="left:264.5px;top:943.300px;width:529px;height:40px"></div>
<div class="card" style="left:810.5px;top:943.300px;width:528.5px;height:40px"></div>
<div class="card" style="left:1355.5px;top:943.300px;width:528.5px;height:40px"></div>
<svg class="abs" style="left:0;top:0" width="1911" height="952" viewBox="0 0 1911 952"><defs><linearGradient id="cg" x1="0" y1="385" x2="0" y2="571" gradientUnits="userSpaceOnUse"><stop offset="0" stop-color="#d6eaf6" stop-opacity=".42"/><stop offset=".55" stop-color="#e6f2fa" stop-opacity=".3"/><stop offset="1" stop-color="#ffffff" stop-opacity="0"/></linearGradient><linearGradient id="cgh" x1="332" y1="0" x2="1319" y2="0" gradientUnits="userSpaceOnUse"><stop offset="0" stop-color="#fff" stop-opacity=".9"/><stop offset=".13" stop-color="#fff" stop-opacity="0"/><stop offset="1" stop-color="#fff" stop-opacity="0"/></linearGradient></defs><path d="M332 362.5H1319" stroke="#eeeeef" stroke-width="1.200"/><path d="M332 414.7H1319" stroke="#eeeeef" stroke-width="1.200"/><path d="M332 466.9H1319" stroke="#eeeeef" stroke-width="1.200"/><path d="M332 519.1H1319" stroke="#eeeeef" stroke-width="1.200"/><path d="M332 571.3H1319" stroke="#eeeeef" stroke-width="1.200"/><path d="M332.2 385.5L334.2 385.5L336.2 385.6L338.2 385.7L340.2 385.8L342.2 386.0L344.2 386.2L346.2 386.5L348.2 386.9L350.2 387.3L352.2 387.7L354.2 388.1L356.2 388.6L358.2 389.2L360.2 389.7L362.2 390.3L364.2 390.8L366.2 391.4L368.2 392.0L370.2 392.6L372.2 393.3L374.2 393.9L376.2 394.6L378.2 395.2L380.2 395.9L382.2 396.6L384.2 397.2L386.2 397.8L388.2 398.3L390.2 398.8L392.2 399.2L394.2 399.5L396.2 399.8L398.2 400.1L400.2 400.3L402.2 400.4L404.3 400.6L406.3 400.7L408.3 400.8L410.3 400.9L412.3 401.0L414.3 401.2L416.3 401.5L418.3 401.8L420.3 402.2L422.3 402.7L424.3 403.2L426.3 403.8L428.3 404.4L430.3 405.2L432.3 406.1L434.3 407.1L436.3 408.5L438.3 410.2L440.3 412.4L442.3 414.9L444.3 417.8L446.3 421.0L448.3 424.5L450.3 428.3L452.3 432.4L454.3 436.7L456.3 441.1L458.3 445.6L460.3 450.0L462.3 454.3L464.3 458.5L466.3 462.3L468.3 466.0L470.3 469.3L472.3 472.3L474.3 475.0L476.3 477.4L478.3 479.5L480.3 481.3L482.3 482.8L484.3 484.0L486.3 485.1L488.3 486.0L490.3 486.7L492.3 487.3L494.3 487.8L496.3 488.1L498.3 488.4L500.3 488.7L502.3 489.0L504.3 489.3L506.3 489.8L508.3 490.4L510.3 491.0L512.3 491.8L514.3 492.7L516.3 493.8L518.3 495.0L520.3 496.5L522.3 498.1L524.3 500.1L526.3 502.2L528.3 504.6L530.3 507.2L532.3 510.1L534.3 513.0L536.3 516.1L538.3 519.3L540.3 522.5L542.3 525.5L544.4 528.5L546.4 531.2L548.4 533.7L550.4 536.1L552.4 538.3L554.4 540.3L556.4 542.0L558.4 543.6L560.4 544.8L562.4 545.9L564.4 546.7L566.4 547.5L568.4 548.0L570.4 548.6L572.4 549.0L574.4 549.4L576.4 549.8L578.4 550.1L580.4 550.3L582.4 550.4L584.4 550.5L586.4 550.5L588.4 550.5L590.4 550.4L592.4 550.3L594.4 550.2L596.4 550.1L598.4 550.0L600.4 549.8L602.4 549.7L604.4 549.5L606.4 549.3L608.4 549.2L610.4 549.0L612.4 548.9L614.4 548.7L616.4 548.6L618.4 548.4L620.4 548.3L622.4 548.2L624.4 548.0L626.4 547.9L628.4 547.8L630.4 547.7L632.4 547.5L634.4 547.4L636.4 547.3L638.4 547.2L640.4 547.1L642.4 547.1L644.4 547.0L646.4 546.9L648.4 546.8L650.4 546.8L652.4 546.7L654.4 546.7L656.4 546.7L658.4 546.6L660.4 546.6L662.4 546.6L664.4 546.6L666.4 546.6L668.4 546.5L670.4 546.5L672.4 546.5L674.4 546.5L676.4 546.5L678.4 546.5L680.4 546.4L682.4 546.4L684.4 546.4L686.5 546.4L688.5 546.4L690.5 546.4L692.5 546.4L694.5 546.4L696.5 546.3L698.5 546.3L700.5 546.3L702.5 546.3L704.5 546.3L706.5 546.3L708.5 546.3L710.5 546.3L712.5 546.3L714.5 546.3L716.5 546.3L718.5 546.3L720.5 546.3L722.5 546.3L724.5 546.3L726.5 546.3L728.5 546.3L730.5 546.2L732.5 546.2L734.5 546.2L736.5 546.1L738.5 546.1L740.5 546.0L742.5 546.0L744.5 545.9L746.5 545.8L748.5 545.7L750.5 545.6L752.5 545.5L754.5 545.3L756.5 545.2L758.5 544.9L760.5 544.7L762.5 544.3L764.5 543.9L766.5 543.5L768.5 542.9L770.5 542.3L772.5 541.7L774.5 541.0L776.5 540.2L778.5 539.4L780.5 538.6L782.5 537.7L784.5 536.8L786.5 536.0L788.5 535.1L790.5 534.3L792.5 533.5L794.5 532.8L796.5 532.2L798.5 531.7L800.5 531.2L802.5 530.8L804.5 530.5L806.5 530.1L808.5 529.8L810.5 529.6L812.5 529.3L814.5 529.1L816.5 528.9L818.5 528.8L820.5 528.6L822.5 528.5L824.5 528.4L826.6 528.3L828.6 528.3L830.6 528.2L832.6 528.1L834.6 528.1L836.6 528.0L838.6 527.9L840.6 527.7L842.6 527.6L844.6 527.4L846.6 527.2L848.6 527.0L850.6 526.7L852.6 526.5L854.6 526.2L856.6 525.9L858.6 525.6L860.6 525.3L862.6 525.0L864.6 524.7L866.6 524.4L868.6 524.1L870.6 523.7L872.6 523.4L874.6 523.1L876.6 522.8L878.6 522.5L880.6 522.2L882.6 522.0L884.6 521.8L886.6 521.6L888.6 521.4L890.6 521.3L892.6 521.1L894.6 521.0L896.6 520.9L898.6 520.8L900.6 520.8L902.6 520.7L904.6 520.6L906.6 520.5L908.6 520.5L910.6 520.4L912.6 520.4L914.6 520.3L916.6 520.2L918.6 520.2L920.6 520.1L922.6 519.9L924.6 519.8L926.6 519.6L928.6 519.3L930.6 519.0L932.6 518.6L934.6 518.2L936.6 517.7L938.6 517.1L940.6 516.6L942.6 515.9L944.6 515.3L946.6 514.6L948.6 514.0L950.6 513.3L952.6 512.6L954.6 511.9L956.6 511.3L958.6 510.7L960.6 510.2L962.6 509.7L964.6 509.3L966.7 509.0L968.7 508.7L970.7 508.4L972.7 508.2L974.7 508.0L976.7 507.8L978.7 507.6L980.7 507.5L982.7 507.4L984.7 507.3L986.7 507.2L988.7 507.1L990.7 507.0L992.7 507.0L994.7 506.9L996.7 506.9L998.7 506.8L1000.7 506.7L1002.7 506.6L1004.7 506.5L1006.7 506.4L1008.7 506.2L1010.7 506.0L1012.7 505.7L1014.7 505.4L1016.7 505.1L1018.7 504.7L1020.7 504.3L1022.7 503.9L1024.7 503.4L1026.7 503.0L1028.7 502.5L1030.7 502.0L1032.7 501.5L1034.7 501.1L1036.7 500.7L1038.7 500.4L1040.7 500.1L1042.7 499.8L1044.7 499.5L1046.7 499.3L1048.7 499.1L1050.7 498.9L1052.7 498.7L1054.7 498.5L1056.7 498.4L1058.7 498.3L1060.7 498.2L1062.7 498.1L1064.7 498.0L1066.7 497.9L1068.7 497.9L1070.7 497.8L1072.7 497.7L1074.7 497.7L1076.7 497.6L1078.7 497.5L1080.7 497.4L1082.7 497.2L1084.7 497.1L1086.7 496.8L1088.7 496.6L1090.7 496.3L1092.7 495.9L1094.7 495.5L1096.7 495.1L1098.7 494.6L1100.7 494.1L1102.7 493.6L1104.7 493.0L1106.7 492.4L1108.8 491.8L1110.8 491.2L1112.8 490.5L1114.8 489.8L1116.8 489.1L1118.8 488.4L1120.8 487.8L1122.8 487.2L1124.8 486.6L1126.8 486.0L1128.8 485.5L1130.8 485.1L1132.8 484.8L1134.8 484.4L1136.8 484.2L1138.8 483.9L1140.8 483.7L1142.8 483.5L1144.8 483.4L1146.8 483.3L1148.8 483.2L1150.8 483.1L1152.8 483.0L1154.8 482.9L1156.8 482.8L1158.8 482.7L1160.8 482.6L1162.8 482.5L1164.8 482.3L1166.8 482.1L1168.8 481.8L1170.8 481.5L1172.8 481.0L1174.8 480.5L1176.8 479.9L1178.8 479.2L1180.8 478.5L1182.8 477.7L1184.8 476.9L1186.8 476.1L1188.8 475.3L1190.8 474.4L1192.8 473.4L1194.8 472.4L1196.8 471.4L1198.8 470.4L1200.8 469.3L1202.8 468.3L1204.8 467.3L1206.8 466.4L1208.8 465.6L1210.8 465.0L1212.8 464.4L1214.8 463.9L1216.8 463.5L1218.8 463.1L1220.8 462.8L1222.8 462.6L1224.8 462.4L1226.8 462.2L1228.8 462.1L1230.8 462.0L1232.8 462.0L1234.8 462.0L1236.8 462.1L1238.8 462.3L1240.8 462.5L1242.8 462.9L1244.8 463.4L1246.8 464.0L1248.9 464.8L1250.9 465.8L1252.9 466.9L1254.9 468.0L1256.9 469.3L1258.9 470.8L1260.9 472.7L1262.9 475.0L1264.9 477.9L1266.9 481.3L1268.9 485.1L1270.9 489.3L1272.9 493.8L1274.9 498.7L1276.9 503.8L1278.9 509.1L1280.9 514.4L1282.9 519.7L1284.9 524.7L1286.9 529.5L1288.9 534.0L1290.9 538.1L1292.9 541.8L1294.9 545.1L1296.9 548.0L1298.9 550.5L1300.9 552.7L1302.9 554.6L1304.9 556.2L1306.9 557.5L1308.9 558.6L1310.9 559.5L1312.9 560.2L1314.9 560.9L1316.9 561.4L1318.9 561.6L1318.9 570.8L332.2 570.8Z" fill="url(#cg)"/><path d="M332.2 385.5L334.2 385.5L336.2 385.6L338.2 385.7L340.2 385.8L342.2 386.0L344.2 386.2L346.2 386.5L348.2 386.9L350.2 387.3L352.2 387.7L354.2 388.1L356.2 388.6L358.2 389.2L360.2 389.7L362.2 390.3L364.2 390.8L366.2 391.4L368.2 392.0L370.2 392.6L372.2 393.3L374.2 393.9L376.2 394.6L378.2 395.2L380.2 395.9L382.2 396.6L384.2 397.2L386.2 397.8L388.2 398.3L390.2 398.8L392.2 399.2L394.2 399.5L396.2 399.8L398.2 400.1L400.2 400.3L402.2 400.4L404.3 400.6L406.3 400.7L408.3 400.8L410.3 400.9L412.3 401.0L414.3 401.2L416.3 401.5L418.3 401.8L420.3 402.2L422.3 402.7L424.3 403.2L426.3 403.8L428.3 404.4L430.3 405.2L432.3 406.1L434.3 407.1L436.3 408.5L438.3 410.2L440.3 412.4L442.3 414.9L444.3 417.8L446.3 421.0L448.3 424.5L450.3 428.3L452.3 432.4L454.3 436.7L456.3 441.1L458.3 445.6L460.3 450.0L462.3 454.3L464.3 458.5L466.3 462.3L468.3 466.0L470.3 469.3L472.3 472.3L474.3 475.0L476.3 477.4L478.3 479.5L480.3 481.3L482.3 482.8L484.3 484.0L486.3 485.1L488.3 486.0L490.3 486.7L492.3 487.3L494.3 487.8L496.3 488.1L498.3 488.4L500.3 488.7L502.3 489.0L504.3 489.3L506.3 489.8L508.3 490.4L510.3 491.0L512.3 491.8L514.3 492.7L516.3 493.8L518.3 495.0L520.3 496.5L522.3 498.1L524.3 500.1L526.3 502.2L528.3 504.6L530.3 507.2L532.3 510.1L534.3 513.0L536.3 516.1L538.3 519.3L540.3 522.5L542.3 525.5L544.4 528.5L546.4 531.2L548.4 533.7L550.4 536.1L552.4 538.3L554.4 540.3L556.4 542.0L558.4 543.6L560.4 544.8L562.4 545.9L564.4 546.7L566.4 547.5L568.4 548.0L570.4 548.6L572.4 549.0L574.4 549.4L576.4 549.8L578.4 550.1L580.4 550.3L582.4 550.4L584.4 550.5L586.4 550.5L588.4 550.5L590.4 550.4L592.4 550.3L594.4 550.2L596.4 550.1L598.4 550.0L600.4 549.8L602.4 549.7L604.4 549.5L606.4 549.3L608.4 549.2L610.4 549.0L612.4 548.9L614.4 548.7L616.4 548.6L618.4 548.4L620.4 548.3L622.4 548.2L624.4 548.0L626.4 547.9L628.4 547.8L630.4 547.7L632.4 547.5L634.4 547.4L636.4 547.3L638.4 547.2L640.4 547.1L642.4 547.1L644.4 547.0L646.4 546.9L648.4 546.8L650.4 546.8L652.4 546.7L654.4 546.7L656.4 546.7L658.4 546.6L660.4 546.6L662.4 546.6L664.4 546.6L666.4 546.6L668.4 546.5L670.4 546.5L672.4 546.5L674.4 546.5L676.4 546.5L678.4 546.5L680.4 546.4L682.4 546.4L684.4 546.4L686.5 546.4L688.5 546.4L690.5 546.4L692.5 546.4L694.5 546.4L696.5 546.3L698.5 546.3L700.5 546.3L702.5 546.3L704.5 546.3L706.5 546.3L708.5 546.3L710.5 546.3L712.5 546.3L714.5 546.3L716.5 546.3L718.5 546.3L720.5 546.3L722.5 546.3L724.5 546.3L726.5 546.3L728.5 546.3L730.5 546.2L732.5 546.2L734.5 546.2L736.5 546.1L738.5 546.1L740.5 546.0L742.5 546.0L744.5 545.9L746.5 545.8L748.5 545.7L750.5 545.6L752.5 545.5L754.5 545.3L756.5 545.2L758.5 544.9L760.5 544.7L762.5 544.3L764.5 543.9L766.5 543.5L768.5 542.9L770.5 542.3L772.5 541.7L774.5 541.0L776.5 540.2L778.5 539.4L780.5 538.6L782.5 537.7L784.5 536.8L786.5 536.0L788.5 535.1L790.5 534.3L792.5 533.5L794.5 532.8L796.5 532.2L798.5 531.7L800.5 531.2L802.5 530.8L804.5 530.5L806.5 530.1L808.5 529.8L810.5 529.6L812.5 529.3L814.5 529.1L816.5 528.9L818.5 528.8L820.5 528.6L822.5 528.5L824.5 528.4L826.6 528.3L828.6 528.3L830.6 528.2L832.6 528.1L834.6 528.1L836.6 528.0L838.6 527.9L840.6 527.7L842.6 527.6L844.6 527.4L846.6 527.2L848.6 527.0L850.6 526.7L852.6 526.5L854.6 526.2L856.6 525.9L858.6 525.6L860.6 525.3L862.6 525.0L864.6 524.7L866.6 524.4L868.6 524.1L870.6 523.7L872.6 523.4L874.6 523.1L876.6 522.8L878.6 522.5L880.6 522.2L882.6 522.0L884.6 521.8L886.6 521.6L888.6 521.4L890.6 521.3L892.6 521.1L894.6 521.0L896.6 520.9L898.6 520.8L900.6 520.8L902.6 520.7L904.6 520.6L906.6 520.5L908.6 520.5L910.6 520.4L912.6 520.4L914.6 520.3L916.6 520.2L918.6 520.2L920.6 520.1L922.6 519.9L924.6 519.8L926.6 519.6L928.6 519.3L930.6 519.0L932.6 518.6L934.6 518.2L936.6 517.7L938.6 517.1L940.6 516.6L942.6 515.9L944.6 515.3L946.6 514.6L948.6 514.0L950.6 513.3L952.6 512.6L954.6 511.9L956.6 511.3L958.6 510.7L960.6 510.2L962.6 509.7L964.6 509.3L966.7 509.0L968.7 508.7L970.7 508.4L972.7 508.2L974.7 508.0L976.7 507.8L978.7 507.6L980.7 507.5L982.7 507.4L984.7 507.3L986.7 507.2L988.7 507.1L990.7 507.0L992.7 507.0L994.7 506.9L996.7 506.9L998.7 506.8L1000.7 506.7L1002.7 506.6L1004.7 506.5L1006.7 506.4L1008.7 506.2L1010.7 506.0L1012.7 505.7L1014.7 505.4L1016.7 505.1L1018.7 504.7L1020.7 504.3L1022.7 503.9L1024.7 503.4L1026.7 503.0L1028.7 502.5L1030.7 502.0L1032.7 501.5L1034.7 501.1L1036.7 500.7L1038.7 500.4L1040.7 500.1L1042.7 499.8L1044.7 499.5L1046.7 499.3L1048.7 499.1L1050.7 498.9L1052.7 498.7L1054.7 498.5L1056.7 498.4L1058.7 498.3L1060.7 498.2L1062.7 498.1L1064.7 498.0L1066.7 497.9L1068.7 497.9L1070.7 497.8L1072.7 497.7L1074.7 497.7L1076.7 497.6L1078.7 497.5L1080.7 497.4L1082.7 497.2L1084.7 497.1L1086.7 496.8L1088.7 496.6L1090.7 496.3L1092.7 495.9L1094.7 495.5L1096.7 495.1L1098.7 494.6L1100.7 494.1L1102.7 493.6L1104.7 493.0L1106.7 492.4L1108.8 491.8L1110.8 491.2L1112.8 490.5L1114.8 489.8L1116.8 489.1L1118.8 488.4L1120.8 487.8L1122.8 487.2L1124.8 486.6L1126.8 486.0L1128.8 485.5L1130.8 485.1L1132.8 484.8L1134.8 484.4L1136.8 484.2L1138.8 483.9L1140.8 483.7L1142.8 483.5L1144.8 483.4L1146.8 483.3L1148.8 483.2L1150.8 483.1L1152.8 483.0L1154.8 482.9L1156.8 482.8L1158.8 482.7L1160.8 482.6L1162.8 482.5L1164.8 482.3L1166.8 482.1L1168.8 481.8L1170.8 481.5L1172.8 481.0L1174.8 480.5L1176.8 479.9L1178.8 479.2L1180.8 478.5L1182.8 477.7L1184.8 476.9L1186.8 476.1L1188.8 475.3L1190.8 474.4L1192.8 473.4L1194.8 472.4L1196.8 471.4L1198.8 470.4L1200.8 469.3L1202.8 468.3L1204.8 467.3L1206.8 466.4L1208.8 465.6L1210.8 465.0L1212.8 464.4L1214.8 463.9L1216.8 463.5L1218.8 463.1L1220.8 462.8L1222.8 462.6L1224.8 462.4L1226.8 462.2L1228.8 462.1L1230.8 462.0L1232.8 462.0L1234.8 462.0L1236.8 462.1L1238.8 462.3L1240.8 462.5L1242.8 462.9L1244.8 463.4L1246.8 464.0L1248.9 464.8L1250.9 465.8L1252.9 466.9L1254.9 468.0L1256.9 469.3L1258.9 470.8L1260.9 472.7L1262.9 475.0L1264.9 477.9L1266.9 481.3L1268.9 485.1L1270.9 489.3L1272.9 493.8L1274.9 498.7L1276.9 503.8L1278.9 509.1L1280.9 514.4L1282.9 519.7L1284.9 524.7L1286.9 529.5L1288.9 534.0L1290.9 538.1L1292.9 541.8L1294.9 545.1L1296.9 548.0L1298.9 550.5L1300.9 552.7L1302.9 554.6L1304.9 556.2L1306.9 557.5L1308.9 558.6L1310.9 559.5L1312.9 560.2L1314.9 560.9L1316.9 561.4L1318.9 561.6L1318.9 570.8L332.2 570.8Z" fill="url(#cgh)"/><path d="M332.2 462.9C333.6 463.2 338.1 463.6 340.9 464.5C343.7 465.4 346.2 466.3 348.8 468.2C351.4 470.1 354.1 472.6 356.7 476.1C359.3 479.6 362.2 484.4 364.6 489.2C367.0 494.0 368.9 499.3 371.1 505.0C373.3 510.7 375.5 517.6 377.7 523.3C379.9 529.0 381.8 534.5 384.2 539.1C386.6 543.7 389.2 547.8 392.1 550.9C395.0 554.0 398.0 556.3 401.3 558.0C404.6 559.7 407.4 560.3 411.8 560.9C416.2 561.5 422.8 561.3 427.6 561.7C432.4 562.1 436.3 562.5 440.7 563.3C445.1 564.0 449.5 565.2 453.9 566.2C458.3 567.2 462.6 568.3 467.0 569.0C471.4 569.7 474.6 570.3 480.1 570.6C485.6 570.9 480.1 570.8 500.0 570.8C639.8 570.8 1182.4 570.8 1318.9 570.8" fill="none" stroke="#86adc0" stroke-width="1.700" stroke-dasharray="0.100 3.600" stroke-linecap="round"/><path d="M332.2 385.5L334.2 385.5L336.2 385.6L338.2 385.7L340.2 385.8L342.2 386.0L344.2 386.2L346.2 386.5L348.2 386.9L350.2 387.3L352.2 387.7L354.2 388.1L356.2 388.6L358.2 389.2L360.2 389.7L362.2 390.3L364.2 390.8L366.2 391.4L368.2 392.0L370.2 392.6L372.2 393.3L374.2 393.9L376.2 394.6L378.2 395.2L380.2 395.9L382.2 396.6L384.2 397.2L386.2 397.8L388.2 398.3L390.2 398.8L392.2 399.2L394.2 399.5L396.2 399.8L398.2 400.1L400.2 400.3L402.2 400.4L404.3 400.6L406.3 400.7L408.3 400.8L410.3 400.9L412.3 401.0L414.3 401.2L416.3 401.5L418.3 401.8L420.3 402.2L422.3 402.7L424.3 403.2L426.3 403.8L428.3 404.4L430.3 405.2L432.3 406.1L434.3 407.1L436.3 408.5L438.3 410.2L440.3 412.4L442.3 414.9L444.3 417.8L446.3 421.0L448.3 424.5L450.3 428.3L452.3 432.4L454.3 436.7L456.3 441.1L458.3 445.6L460.3 450.0L462.3 454.3L464.3 458.5L466.3 462.3L468.3 466.0L470.3 469.3L472.3 472.3L474.3 475.0L476.3 477.4L478.3 479.5L480.3 481.3L482.3 482.8L484.3 484.0L486.3 485.1L488.3 486.0L490.3 486.7L492.3 487.3L494.3 487.8L496.3 488.1L498.3 488.4L500.3 488.7L502.3 489.0L504.3 489.3L506.3 489.8L508.3 490.4L510.3 491.0L512.3 491.8L514.3 492.7L516.3 493.8L518.3 495.0L520.3 496.5L522.3 498.1L524.3 500.1L526.3 502.2L528.3 504.6L530.3 507.2L532.3 510.1L534.3 513.0L536.3 516.1L538.3 519.3L540.3 522.5L542.3 525.5L544.4 528.5L546.4 531.2L548.4 533.7L550.4 536.1L552.4 538.3L554.4 540.3L556.4 542.0L558.4 543.6L560.4 544.8L562.4 545.9L564.4 546.7L566.4 547.5L568.4 548.0L570.4 548.6L572.4 549.0L574.4 549.4L576.4 549.8L578.4 550.1L580.4 550.3L582.4 550.4L584.4 550.5L586.4 550.5L588.4 550.5L590.4 550.4L592.4 550.3L594.4 550.2L596.4 550.1L598.4 550.0L600.4 549.8L602.4 549.7L604.4 549.5L606.4 549.3L608.4 549.2L610.4 549.0L612.4 548.9L614.4 548.7L616.4 548.6L618.4 548.4L620.4 548.3L622.4 548.2L624.4 548.0L626.4 547.9L628.4 547.8L630.4 547.7L632.4 547.5L634.4 547.4L636.4 547.3L638.4 547.2L640.4 547.1L642.4 547.1L644.4 547.0L646.4 546.9L648.4 546.8L650.4 546.8L652.4 546.7L654.4 546.7L656.4 546.7L658.4 546.6L660.4 546.6L662.4 546.6L664.4 546.6L666.4 546.6L668.4 546.5L670.4 546.5L672.4 546.5L674.4 546.5L676.4 546.5L678.4 546.5L680.4 546.4L682.4 546.4L684.4 546.4L686.5 546.4L688.5 546.4L690.5 546.4L692.5 546.4L694.5 546.4L696.5 546.3L698.5 546.3L700.5 546.3L702.5 546.3L704.5 546.3L706.5 546.3L708.5 546.3L710.5 546.3L712.5 546.3L714.5 546.3L716.5 546.3L718.5 546.3L720.5 546.3L722.5 546.3L724.5 546.3L726.5 546.3L728.5 546.3L730.5 546.2L732.5 546.2L734.5 546.2L736.5 546.1L738.5 546.1L740.5 546.0L742.5 546.0L744.5 545.9L746.5 545.8L748.5 545.7L750.5 545.6L752.5 545.5L754.5 545.3L756.5 545.2L758.5 544.9L760.5 544.7L762.5 544.3L764.5 543.9L766.5 543.5L768.5 542.9L770.5 542.3L772.5 541.7L774.5 541.0L776.5 540.2L778.5 539.4L780.5 538.6L782.5 537.7L784.5 536.8L786.5 536.0L788.5 535.1L790.5 534.3L792.5 533.5L794.5 532.8L796.5 532.2L798.5 531.7L800.5 531.2L802.5 530.8L804.5 530.5L806.5 530.1L808.5 529.8L810.5 529.6L812.5 529.3L814.5 529.1L816.5 528.9L818.5 528.8L820.5 528.6L822.5 528.5L824.5 528.4L826.6 528.3L828.6 528.3L830.6 528.2L832.6 528.1L834.6 528.1L836.6 528.0L838.6 527.9L840.6 527.7L842.6 527.6L844.6 527.4L846.6 527.2L848.6 527.0L850.6 526.7L852.6 526.5L854.6 526.2L856.6 525.9L858.6 525.6L860.6 525.3L862.6 525.0L864.6 524.7L866.6 524.4L868.6 524.1L870.6 523.7L872.6 523.4L874.6 523.1L876.6 522.8L878.6 522.5L880.6 522.2L882.6 522.0L884.6 521.8L886.6 521.6L888.6 521.4L890.6 521.3L892.6 521.1L894.6 521.0L896.6 520.9L898.6 520.8L900.6 520.8L902.6 520.7L904.6 520.6L906.6 520.5L908.6 520.5L910.6 520.4L912.6 520.4L914.6 520.3L916.6 520.2L918.6 520.2L920.6 520.1L922.6 519.9L924.6 519.8L926.6 519.6L928.6 519.3L930.6 519.0L932.6 518.6L934.6 518.2L936.6 517.7L938.6 517.1L940.6 516.6L942.6 515.9L944.6 515.3L946.6 514.6L948.6 514.0L950.6 513.3L952.6 512.6L954.6 511.9L956.6 511.3L958.6 510.7L960.6 510.2L962.6 509.7L964.6 509.3L966.7 509.0L968.7 508.7L970.7 508.4L972.7 508.2L974.7 508.0L976.7 507.8L978.7 507.6L980.7 507.5L982.7 507.4L984.7 507.3L986.7 507.2L988.7 507.1L990.7 507.0L992.7 507.0L994.7 506.9L996.7 506.9L998.7 506.8L1000.7 506.7L1002.7 506.6L1004.7 506.5L1006.7 506.4L1008.7 506.2L1010.7 506.0L1012.7 505.7L1014.7 505.4L1016.7 505.1L1018.7 504.7L1020.7 504.3L1022.7 503.9L1024.7 503.4L1026.7 503.0L1028.7 502.5L1030.7 502.0L1032.7 501.5L1034.7 501.1L1036.7 500.7L1038.7 500.4L1040.7 500.1L1042.7 499.8L1044.7 499.5L1046.7 499.3L1048.7 499.1L1050.7 498.9L1052.7 498.7L1054.7 498.5L1056.7 498.4L1058.7 498.3L1060.7 498.2L1062.7 498.1L1064.7 498.0L1066.7 497.9L1068.7 497.9L1070.7 497.8L1072.7 497.7L1074.7 497.7L1076.7 497.6L1078.7 497.5L1080.7 497.4L1082.7 497.2L1084.7 497.1L1086.7 496.8L1088.7 496.6L1090.7 496.3L1092.7 495.9L1094.7 495.5L1096.7 495.1L1098.7 494.6L1100.7 494.1L1102.7 493.6L1104.7 493.0L1106.7 492.4L1108.8 491.8L1110.8 491.2L1112.8 490.5L1114.8 489.8L1116.8 489.1L1118.8 488.4L1120.8 487.8L1122.8 487.2L1124.8 486.6L1126.8 486.0L1128.8 485.5L1130.8 485.1L1132.8 484.8L1134.8 484.4L1136.8 484.2L1138.8 483.9L1140.8 483.7L1142.8 483.5L1144.8 483.4L1146.8 483.3L1148.8 483.2L1150.8 483.1L1152.8 483.0L1154.8 482.9L1156.8 482.8L1158.8 482.7L1160.8 482.6L1162.8 482.5L1164.8 482.3L1166.8 482.1L1168.8 481.8L1170.8 481.5L1172.8 481.0L1174.8 480.5L1176.8 479.9L1178.8 479.2L1180.8 478.5L1182.8 477.7L1184.8 476.9L1186.8 476.1L1188.8 475.3L1190.8 474.4L1192.8 473.4L1194.8 472.4L1196.8 471.4L1198.8 470.4L1200.8 469.3L1202.8 468.3L1204.8 467.3L1206.8 466.4L1208.8 465.6L1210.8 465.0L1212.8 464.4L1214.8 463.9L1216.8 463.5L1218.8 463.1L1220.8 462.8L1222.8 462.6L1224.8 462.4L1226.8 462.2L1228.8 462.1L1230.8 462.0L1232.8 462.0L1234.8 462.0L1236.8 462.1L1238.8 462.3L1240.8 462.5L1242.8 462.9L1244.8 463.4L1246.8 464.0L1248.9 464.8L1250.9 465.8L1252.9 466.9L1254.9 468.0L1256.9 469.3L1258.9 470.8L1260.9 472.7L1262.9 475.0L1264.9 477.9L1266.9 481.3L1268.9 485.1L1270.9 489.3L1272.9 493.8L1274.9 498.7L1276.9 503.8L1278.9 509.1L1280.9 514.4L1282.9 519.7L1284.9 524.7L1286.9 529.5L1288.9 534.0L1290.9 538.1L1292.9 541.8L1294.9 545.1L1296.9 548.0L1298.9 550.5L1300.9 552.7L1302.9 554.6L1304.9 556.2L1306.9 557.5L1308.9 558.6L1310.9 559.5L1312.9 560.2L1314.9 560.9L1316.9 561.4L1318.9 561.6" fill="none" stroke="#3f9cc9" stroke-width="1.900" stroke-linejoin="round" stroke-linecap="round"/><path d="M653 629H666" stroke="#3f9cc9" stroke-width="2" stroke-linecap="round"/><path d="M825 629H837" stroke="#8dc3dc" stroke-width="1.600" stroke-dasharray="0.100 4.500" stroke-linecap="round"/><defs><linearGradient id="d1" x1="309" y1="0" x2="477" y2="0" gradientUnits="userSpaceOnUse"><stop offset="0" stop-color="#43b3ec"/><stop offset="1" stop-color="#2f9cda"/></linearGradient><linearGradient id="d2" x1="0" y1="0" x2="1" y2="1"><stop offset="0" stop-color="#a164f2"/><stop offset="1" stop-color="#8a4de6"/></linearGradient></defs><path d="M394.47 733.21A84.3 84.3 0 1 1 329.96 761.53L342.90 773.02A67 67 0 1 0 394.17 750.51Z" fill="url(#d1)"/><path d="M331.75 759.58A84.3 84.3 0 0 1 370.47 736.27L375.10 752.94A67 67 0 0 0 344.32 771.47Z" fill="url(#d2)"/><path d="M373.03 735.60A84.3 84.3 0 0 1 386.83 733.43L388.09 750.68A67 67 0 0 0 377.13 752.41Z" fill="#7a8cec"/><path d="M389.03 733.29A84.3 84.3 0 0 1 391.38 733.22L391.71 750.51A67 67 0 0 0 389.84 750.57Z" fill="#e256b4"/><defs><linearGradient id="ag" x1="0" y1="785" x2="0" y2="841" gradientUnits="userSpaceOnUse"><stop offset="0" stop-color="#d6eaf6" stop-opacity=".38"/><stop offset="1" stop-color="#ffffff" stop-opacity="0"/></linearGradient></defs><path d="M878 768H1320M878 840.800H1320" stroke="#eeeeef" stroke-width="1.200"/><path d="M878.0 803.9L880.0 803.7L882.0 803.6L884.0 803.4L886.0 803.1L888.0 802.9L890.1 802.6L892.1 802.3L894.1 801.9L896.1 801.4L898.1 800.9L900.1 800.4L902.1 800.1L904.1 799.8L906.1 799.7L908.1 799.6L910.1 799.5L912.1 799.5L914.2 799.4L916.2 799.3L918.2 799.3L920.2 799.2L922.2 799.2L924.2 799.2L926.2 799.1L928.2 799.1L930.2 799.0L932.2 799.0L934.2 799.0L936.3 799.0L938.3 798.9L940.3 798.9L942.3 798.9L944.3 798.8L946.3 798.8L948.3 798.7L950.3 798.7L952.3 798.7L954.3 798.6L956.3 798.6L958.3 798.6L960.4 798.5L962.4 798.5L964.4 798.5L966.4 798.4L968.4 798.4L970.4 798.4L972.4 798.3L974.4 798.3L976.4 798.2L978.4 798.2L980.4 798.1L982.4 798.1L984.5 798.0L986.5 797.9L988.5 797.9L990.5 797.8L992.5 797.7L994.5 797.6L996.5 797.4L998.5 797.1L1000.5 796.7L1002.5 796.2L1004.5 795.7L1006.6 794.9L1008.6 794.1L1010.6 793.4L1012.6 792.8L1014.6 792.5L1016.6 792.2L1018.6 791.9L1020.6 791.7L1022.6 791.6L1024.6 791.6L1026.6 791.7L1028.6 791.8L1030.7 791.9L1032.7 792.1L1034.7 792.4L1036.7 792.7L1038.7 793.2L1040.7 793.9L1042.7 794.7L1044.7 795.3L1046.7 795.9L1048.7 796.5L1050.7 797.2L1052.8 797.7L1054.8 798.2L1056.8 798.4L1058.8 798.5L1060.8 798.6L1062.8 798.8L1064.8 798.8L1066.8 798.9L1068.8 799.0L1070.8 799.1L1072.8 799.1L1074.8 799.2L1076.9 799.2L1078.9 799.3L1080.9 799.3L1082.9 799.4L1084.9 799.4L1086.9 799.4L1088.9 799.5L1090.9 799.5L1092.9 799.6L1094.9 799.6L1096.9 799.6L1099.0 799.7L1101.0 799.7L1103.0 799.7L1105.0 799.8L1107.0 799.8L1109.0 799.8L1111.0 799.9L1113.0 799.9L1115.0 799.9L1117.0 800.0L1119.0 800.0L1121.0 800.0L1123.1 800.1L1125.1 800.1L1127.1 800.1L1129.1 800.2L1131.1 800.2L1133.1 800.3L1135.1 800.3L1137.1 800.4L1139.1 800.4L1141.1 800.5L1143.1 800.6L1145.1 800.7L1147.2 801.1L1149.2 801.5L1151.2 802.1L1153.2 802.6L1155.2 803.2L1157.2 803.6L1159.2 803.9L1161.2 804.2L1163.2 804.5L1165.2 804.8L1167.2 805.0L1169.3 805.2L1171.3 805.2L1173.3 805.2L1175.3 805.1L1177.3 805.0L1179.3 804.9L1181.3 804.7L1183.3 804.5L1185.3 804.3L1187.3 803.9L1189.3 803.4L1191.3 802.7L1193.4 802.1L1195.4 801.5L1197.4 801.0L1199.4 800.8L1201.4 800.5L1203.4 800.4L1205.4 800.2L1207.4 800.0L1209.4 799.9L1211.4 799.8L1213.4 799.7L1215.5 799.7L1217.5 799.6L1219.5 799.5L1221.5 799.5L1223.5 799.5L1225.5 799.4L1227.5 799.4L1229.5 799.4L1231.5 799.3L1233.5 799.3L1235.5 799.3L1237.5 799.2L1239.6 799.2L1241.6 799.1L1243.6 799.1L1245.6 799.0L1247.6 799.0L1249.6 798.9L1251.6 798.8L1253.6 798.6L1255.6 798.2L1257.6 797.7L1259.6 797.1L1261.6 796.6L1263.7 795.9L1265.7 795.2L1267.7 794.5L1269.7 793.9L1271.7 793.5L1273.7 793.2L1275.7 792.9L1277.7 792.7L1279.7 792.5L1281.7 792.3L1283.7 792.1L1285.8 792.0L1287.8 791.9L1289.8 791.7L1291.8 791.6L1293.8 791.4L1295.8 790.9L1297.8 790.1L1299.8 789.1L1301.8 788.0L1303.8 787.0L1305.8 786.2L1307.8 785.7L1309.9 785.3L1311.9 784.9L1313.9 784.6L1315.9 784.3L1317.9 784.1L1319.9 784.0L1319.9 840.7L878 840.7Z" fill="url(#ag)"/><path d="M878.0 792.2C879.7 792.0 884.1 791.8 888.0 790.8C891.9 789.8 897.3 787.0 901.6 785.9C905.9 784.8 910.3 783.6 913.9 784.0C917.5 784.4 920.9 785.8 923.4 788.1C925.9 790.4 927.2 793.1 928.8 797.6C930.4 802.1 931.3 809.6 932.9 815.3C934.5 821.0 936.6 827.8 938.4 831.6C940.2 835.5 941.8 836.9 943.8 838.4C945.8 839.9 947.9 840.2 950.6 840.6C953.3 841.0 950.6 840.7 960.0 840.7C1021.5 840.7 1259.9 840.7 1319.9 840.7" fill="none" stroke="#86adc0" stroke-width="1.700" stroke-dasharray="0.100 3.600" stroke-linecap="round"/><path d="M878.0 803.9L880.0 803.7L882.0 803.6L884.0 803.4L886.0 803.1L888.0 802.9L890.1 802.6L892.1 802.3L894.1 801.9L896.1 801.4L898.1 800.9L900.1 800.4L902.1 800.1L904.1 799.8L906.1 799.7L908.1 799.6L910.1 799.5L912.1 799.5L914.2 799.4L916.2 799.3L918.2 799.3L920.2 799.2L922.2 799.2L924.2 799.2L926.2 799.1L928.2 799.1L930.2 799.0L932.2 799.0L934.2 799.0L936.3 799.0L938.3 798.9L940.3 798.9L942.3 798.9L944.3 798.8L946.3 798.8L948.3 798.7L950.3 798.7L952.3 798.7L954.3 798.6L956.3 798.6L958.3 798.6L960.4 798.5L962.4 798.5L964.4 798.5L966.4 798.4L968.4 798.4L970.4 798.4L972.4 798.3L974.4 798.3L976.4 798.2L978.4 798.2L980.4 798.1L982.4 798.1L984.5 798.0L986.5 797.9L988.5 797.9L990.5 797.8L992.5 797.7L994.5 797.6L996.5 797.4L998.5 797.1L1000.5 796.7L1002.5 796.2L1004.5 795.7L1006.6 794.9L1008.6 794.1L1010.6 793.4L1012.6 792.8L1014.6 792.5L1016.6 792.2L1018.6 791.9L1020.6 791.7L1022.6 791.6L1024.6 791.6L1026.6 791.7L1028.6 791.8L1030.7 791.9L1032.7 792.1L1034.7 792.4L1036.7 792.7L1038.7 793.2L1040.7 793.9L1042.7 794.7L1044.7 795.3L1046.7 795.9L1048.7 796.5L1050.7 797.2L1052.8 797.7L1054.8 798.2L1056.8 798.4L1058.8 798.5L1060.8 798.6L1062.8 798.8L1064.8 798.8L1066.8 798.9L1068.8 799.0L1070.8 799.1L1072.8 799.1L1074.8 799.2L1076.9 799.2L1078.9 799.3L1080.9 799.3L1082.9 799.4L1084.9 799.4L1086.9 799.4L1088.9 799.5L1090.9 799.5L1092.9 799.6L1094.9 799.6L1096.9 799.6L1099.0 799.7L1101.0 799.7L1103.0 799.7L1105.0 799.8L1107.0 799.8L1109.0 799.8L1111.0 799.9L1113.0 799.9L1115.0 799.9L1117.0 800.0L1119.0 800.0L1121.0 800.0L1123.1 800.1L1125.1 800.1L1127.1 800.1L1129.1 800.2L1131.1 800.2L1133.1 800.3L1135.1 800.3L1137.1 800.4L1139.1 800.4L1141.1 800.5L1143.1 800.6L1145.1 800.7L1147.2 801.1L1149.2 801.5L1151.2 802.1L1153.2 802.6L1155.2 803.2L1157.2 803.6L1159.2 803.9L1161.2 804.2L1163.2 804.5L1165.2 804.8L1167.2 805.0L1169.3 805.2L1171.3 805.2L1173.3 805.2L1175.3 805.1L1177.3 805.0L1179.3 804.9L1181.3 804.7L1183.3 804.5L1185.3 804.3L1187.3 803.9L1189.3 803.4L1191.3 802.7L1193.4 802.1L1195.4 801.5L1197.4 801.0L1199.4 800.8L1201.4 800.5L1203.4 800.4L1205.4 800.2L1207.4 800.0L1209.4 799.9L1211.4 799.8L1213.4 799.7L1215.5 799.7L1217.5 799.6L1219.5 799.5L1221.5 799.5L1223.5 799.5L1225.5 799.4L1227.5 799.4L1229.5 799.4L1231.5 799.3L1233.5 799.3L1235.5 799.3L1237.5 799.2L1239.6 799.2L1241.6 799.1L1243.6 799.1L1245.6 799.0L1247.6 799.0L1249.6 798.9L1251.6 798.8L1253.6 798.6L1255.6 798.2L1257.6 797.7L1259.6 797.1L1261.6 796.6L1263.7 795.9L1265.7 795.2L1267.7 794.5L1269.7 793.9L1271.7 793.5L1273.7 793.2L1275.7 792.9L1277.7 792.7L1279.7 792.5L1281.7 792.3L1283.7 792.1L1285.8 792.0L1287.8 791.9L1289.8 791.7L1291.8 791.6L1293.8 791.4L1295.8 790.9L1297.8 790.1L1299.8 789.1L1301.8 788.0L1303.8 787.0L1305.8 786.2L1307.8 785.7L1309.9 785.3L1311.9 784.9L1313.9 784.6L1315.9 784.3L1317.9 784.1L1319.9 784.0" fill="none" stroke="#3f9cc9" stroke-width="2" stroke-linejoin="round" stroke-linecap="round"/><path d="M927 899.500H939" stroke="#3f9cc9" stroke-width="2" stroke-linecap="round"/><path d="M1098.500 899.500H1110.500" stroke="#8dc3dc" stroke-width="1.600" stroke-dasharray="0.100 4.500" stroke-linecap="round"/></svg>
<!--POPUP--><div class="abs" style="left:1586px;top:845.500px;width:208px;height:88.500px;border-radius:8px;background:#f9fafb;box-shadow:0 0 0 1px rgba(0,0,0,.05),0 3px 8px rgba(0,0,0,.18)"></div>
<div class="abs" style="left:1711px;top:851.500px;width:37.500px;height:38px;border-radius:4px;background:#fefefe;box-shadow:0 0 2px rgba(0,0,0,.08)"></div>
<svg class="abs" style="left:1586px;top:845px" width="208" height="90" viewBox="1586 845 208 90">
<path d="M1610.200 861.900c3.600 0 6.400 1 7.400 3.200 1 2.300 1 6 .1 8.900-.8 2.600-3.700 4.200-7.300 4.200s-6.700-1.400-7.700-4c-1-2.800-.8-6.500.3-8.900 1-2.300 3.600-3.400 7.200-3.400z" fill="#5fa81f"/><path d="M1606.800 870.500l2.300 2.300 4.400-4.500" fill="none" stroke="#fff" stroke-width="1.700" stroke-linecap="round" stroke-linejoin="round"/>
<path d="M1641.800 865.600h9.500l-4.300 11.400z" fill="#4a4a52"/><path d="M1646.500 865.600h4.800l-4.300 11.400z" fill="#8e8e98"/><circle cx="1653.700" cy="866.700" r="4.600" fill="#d7324f"/><path d="M1652 865l3.400 3.400M1655.400 865l-3.400 3.400" stroke="#fff" stroke-width="1.300" stroke-linecap="round"/>
<g fill="none" stroke="#4f4f4f" stroke-width="1"><rect x="1686.30" y="863.20" width="2.8" height="6.8" rx="1.400"/><rect x="1690.10" y="867.20" width="6.8" height="2.8" rx="1.400"/><rect x="1690.10" y="871.00" width="2.8" height="6.8" rx="1.400"/><rect x="1682.30" y="871.00" width="6.8" height="2.8" rx="1.400"/><circle cx="1683.70" cy="868.60" r="1.350"/><circle cx="1691.50" cy="864.60" r="1.350"/><circle cx="1695.50" cy="872.40" r="1.350"/><circle cx="1687.70" cy="876.40" r="1.350"/></g>
<path d="M1722.700 877.600c.7-3.200 2.700-6.500 5.600-9.400 2.900-2.800 6-4.900 9-6.300 0 2.500-.8 4.900-2.600 7-2.500 3-6 4.900-9.900 5.900z" fill="#b08ddb"/><path d="M1722.600 877.800c2.300-4.800 6.500-9.700 12.300-13.800" fill="none" stroke="#7b4fb5" stroke-width=".9" stroke-linecap="round"/>
<path d="M1764.200 866.400c0-2.500 2.600-4 5.800-4s5.800 1.500 5.800 4c0 .9-.7 1.400-1.500 1.500v8.200c0 1-.8 1.800-1.800 1.800h-5c-1 0-1.800-.8-1.800-1.800v-8.200c-.8-.1-1.500-.6-1.500-1.500z" fill="#2b2b2b"/><path d="M1765.800 865.800c.9-1.300 2.400-1.900 4.200-1.900s3.300.6 4.200 1.900" fill="none" stroke="#777" stroke-width=".9"/><path d="M1768.100 869.600v6.400M1771.900 869.600v6.400M1768.100 872.800h3.800" stroke="#e6e6e6" stroke-width="1.300"/>
<path d="M1610.200 902.200l7.200 2.400v4.600c0 3.800-2.900 6.300-7.200 7.600-4.300-1.300-7.200-3.800-7.200-7.600v-4.600z" fill="#1b7fd0"/><path d="M1610.200 902.200v14.600c-4.300-1.300-7.200-3.800-7.200-7.600v-4.600z" fill="#35b3ee"/><path d="M1603 909.200h14.400v-4.600l-7.200-2.400z" fill="#1a6fb8" opacity=".55"/><path d="M1613.500 908.700l4.900 9.200h-9.800z" fill="#ffd23e" stroke="#f9fafb" stroke-width=".6"/><path d="M1613.500 911.800v3" stroke="#222" stroke-width="1.100"/><circle cx="1613.500" cy="916.400" r=".65" fill="#222"/>
<rect x="1643.900" y="901.800" width="12.300" height="16.500" rx="6.150" fill="#0b7cdd"/><path d="M1647 906.600l6 5.400-3 2.700v-9.400l3 2.700-6 5.400" fill="none" stroke="#fff" stroke-width="1.100" stroke-linejoin="round" stroke-linecap="round"/>
</svg><!--/POPUP--><!--/MAIN2-->

<div id="botstrip"></div>
</div>
</body>
</html>
